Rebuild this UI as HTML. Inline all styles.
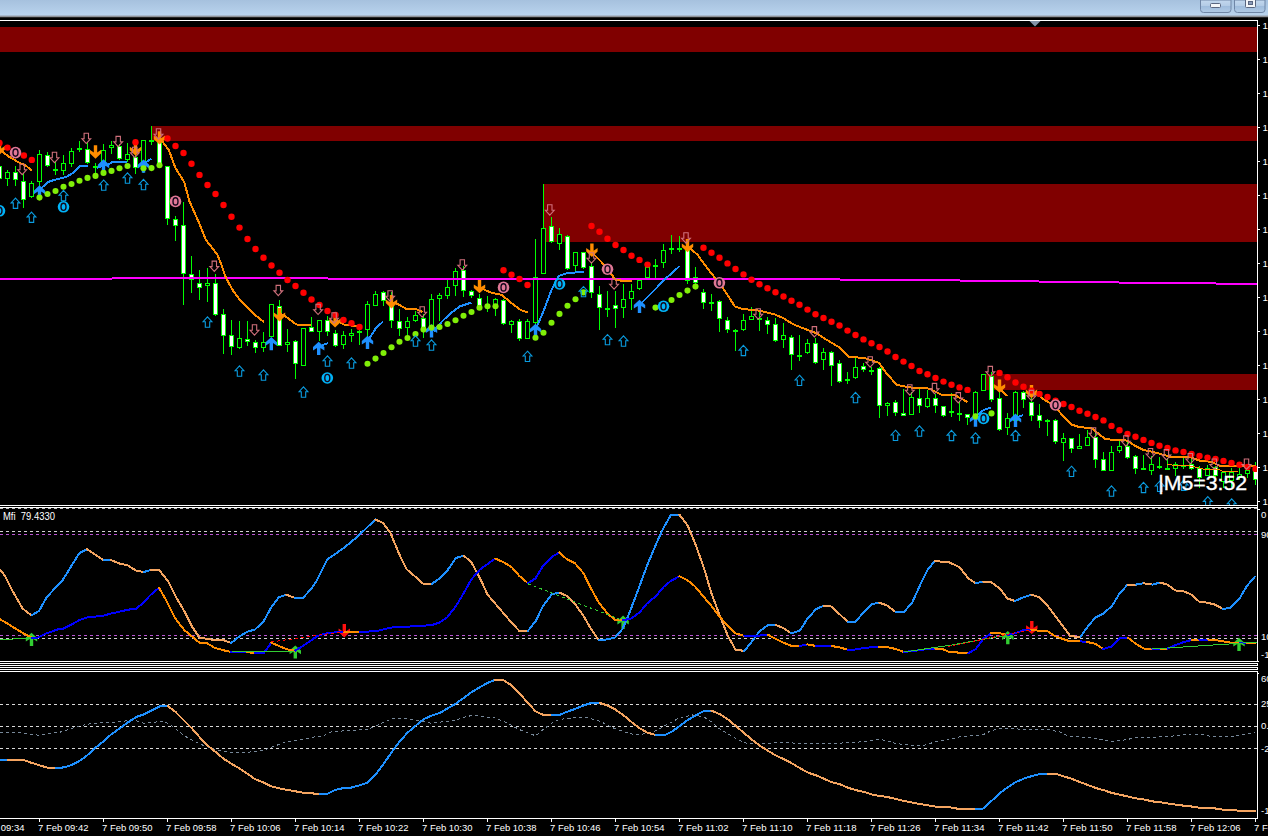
<!DOCTYPE html><html><head><meta charset="utf-8"><title>chart</title><style>
html,body{margin:0;padding:0;background:#000;overflow:hidden}body{width:1268px;height:836px;position:relative;font-family:"Liberation Sans",sans-serif}svg{position:absolute;left:0;top:0;display:block}text{font-family:"Liberation Sans",sans-serif}
</style></head><body>
<svg width="1268" height="836" viewBox="0 0 1268 836">
<defs><linearGradient id="tb" x1="0" y1="0" x2="0" y2="1"><stop offset="0" stop-color="#a6c1de"/><stop offset="1" stop-color="#bad4ee"/></linearGradient>
<linearGradient id="btn" x1="0" y1="0" x2="0" y2="1"><stop offset="0" stop-color="#c3d8ee"/><stop offset="0.45" stop-color="#b4cce6"/><stop offset="0.5" stop-color="#9fbcdc"/><stop offset="1" stop-color="#b0cae6"/></linearGradient>
<clipPath id="cm"><rect x="0" y="21" width="1257" height="484"/></clipPath>
<clipPath id="c2"><rect x="0" y="508" width="1257" height="153"/></clipPath>
<clipPath id="c3"><rect x="0" y="672" width="1257" height="146"/></clipPath>
</defs>
<rect width="1268" height="836" fill="#000"/>
<rect x="0" y="0" width="1268" height="16" fill="url(#tb)"/><rect x="0" y="15.6" width="1268" height="1.4" fill="#8e9298"/><rect x="0" y="17" width="1268" height="1" fill="#262626"/>
<path d="M1200.5,0 V9.5 Q1200.5,12.5 1203.5,12.5 H1228 Q1231,12.5 1231,9.5 V0 Z" fill="url(#btn)" stroke="#6f86a6" stroke-width="1"/>
<path d="M1234.5,0 V9.5 Q1234.5,12.5 1237.5,12.5 H1262 Q1265,12.5 1265,9.5 V0 Z" fill="url(#btn)" stroke="#6f86a6" stroke-width="1"/>
<rect x="1210.5" y="3.5" width="10" height="4" rx="1" fill="#f4f6f9" stroke="#5b6780" stroke-width="1"/>
<rect x="1245.5" y="-2.5" width="10" height="10" rx="1" fill="#f4f6f9" stroke="#5b6780" stroke-width="1"/>
<rect x="1248.5" y="1.5" width="4" height="3" fill="#8a99b8" stroke="#5b6780" stroke-width="1"/>
<g shape-rendering="crispEdges">
<rect x="0" y="20" width="1258" height="1" fill="#fff"/>
<rect x="1257" y="20" width="1" height="642" fill="#fff"/>
<rect x="1257" y="671" width="1" height="148" fill="#fff"/>
<rect x="1257" y="663" width="1" height="3" fill="#fff"/>
<rect x="1257" y="667" width="1" height="3" fill="#fff"/>
<rect x="0" y="505" width="1258" height="1" fill="#fff"/>
<rect x="0" y="507" width="1258" height="1" fill="#fff"/>
<rect x="0" y="661" width="1258" height="1" fill="#fff"/>
<rect x="0" y="663" width="1258" height="1" fill="#fff"/>
<rect x="0" y="665" width="1258" height="1" fill="#fff"/>
<rect x="0" y="667" width="1258" height="1" fill="#fff"/>
<rect x="0" y="669" width="1258" height="1" fill="#fff"/>
<rect x="0" y="671" width="1258" height="1" fill="#fff"/>
<rect x="0" y="818" width="1258" height="1" fill="#fff"/>
<rect x="1258" y="25" width="2" height="1" fill="#fff"/>
<rect x="1258" y="59" width="2" height="1" fill="#fff"/>
<rect x="1258" y="93" width="2" height="1" fill="#fff"/>
<rect x="1258" y="127" width="2" height="1" fill="#fff"/>
<rect x="1258" y="161" width="2" height="1" fill="#fff"/>
<rect x="1258" y="195" width="2" height="1" fill="#fff"/>
<rect x="1258" y="229" width="2" height="1" fill="#fff"/>
<rect x="1258" y="263" width="2" height="1" fill="#fff"/>
<rect x="1258" y="297" width="2" height="1" fill="#fff"/>
<rect x="1258" y="331" width="2" height="1" fill="#fff"/>
<rect x="1258" y="365" width="2" height="1" fill="#fff"/>
<rect x="1258" y="399" width="2" height="1" fill="#fff"/>
<rect x="1258" y="433" width="2" height="1" fill="#fff"/>
<rect x="1258" y="467" width="2" height="1" fill="#fff"/>
<rect x="1258" y="501" width="2" height="1" fill="#fff"/>
<rect x="39" y="819" width="1" height="3" fill="#fff"/>
<rect x="103" y="819" width="1" height="3" fill="#fff"/>
<rect x="167" y="819" width="1" height="3" fill="#fff"/>
<rect x="231" y="819" width="1" height="3" fill="#fff"/>
<rect x="295" y="819" width="1" height="3" fill="#fff"/>
<rect x="359" y="819" width="1" height="3" fill="#fff"/>
<rect x="423" y="819" width="1" height="3" fill="#fff"/>
<rect x="487" y="819" width="1" height="3" fill="#fff"/>
<rect x="551" y="819" width="1" height="3" fill="#fff"/>
<rect x="615" y="819" width="1" height="3" fill="#fff"/>
<rect x="679" y="819" width="1" height="3" fill="#fff"/>
<rect x="743" y="819" width="1" height="3" fill="#fff"/>
<rect x="807" y="819" width="1" height="3" fill="#fff"/>
<rect x="871" y="819" width="1" height="3" fill="#fff"/>
<rect x="935" y="819" width="1" height="3" fill="#fff"/>
<rect x="999" y="819" width="1" height="3" fill="#fff"/>
<rect x="1063" y="819" width="1" height="3" fill="#fff"/>
<rect x="1127" y="819" width="1" height="3" fill="#fff"/>
<rect x="1191" y="819" width="1" height="3" fill="#fff"/>
<rect x="1255" y="819" width="1" height="3" fill="#fff"/>
<rect x="1258" y="509" width="2" height="1" fill="#fff"/><rect x="1258" y="661" width="1" height="1" fill="#fff"/><rect x="1258" y="673" width="1" height="1" fill="#fff"/>
<rect x="0" y="27" width="1257" height="25" fill="#800000"/>
<rect x="152" y="126" width="1105" height="15" fill="#800000"/>
<rect x="544" y="184" width="713" height="58" fill="#800000"/>
<rect x="984" y="374" width="273" height="16" fill="#800000"/>
<line x1="0" y1="508.5" x2="1257" y2="508.5" stroke="#c0c0c0" stroke-width="1" stroke-dasharray="3 3"/>
<line x1="0" y1="531.5" x2="1257" y2="531.5" stroke="#d0d0d0" stroke-width="1" stroke-dasharray="3 3"/>
<line x1="0" y1="534.5" x2="1257" y2="534.5" stroke="#BA55D3" stroke-width="1" stroke-dasharray="3 3"/>
<line x1="0" y1="635.5" x2="1257" y2="635.5" stroke="#BA55D3" stroke-width="1" stroke-dasharray="3 3"/>
<line x1="0" y1="638.5" x2="1257" y2="638.5" stroke="#d0d0d0" stroke-width="1" stroke-dasharray="3 3"/>
<line x1="0" y1="704.5" x2="1257" y2="704.5" stroke="#d8d8d8" stroke-width="1" stroke-dasharray="3 3"/>
<line x1="0" y1="726.5" x2="1257" y2="726.5" stroke="#d8d8d8" stroke-width="1" stroke-dasharray="3 3"/>
<line x1="0" y1="748.5" x2="1257" y2="748.5" stroke="#d8d8d8" stroke-width="1" stroke-dasharray="3 3"/>
</g>
<polygon points="1029.5,21 1040.5,21 1035,26.5" fill="#8494a8"/>
<g clip-path="url(#cm)">
<g shape-rendering="crispEdges"><rect x="-1" y="160" width="1" height="25" fill="#0f0"/>
<rect x="-2.5" y="166.5" width="4" height="12" fill="#fff" stroke="#0f0" stroke-width="1"/>
<rect x="7" y="170" width="1" height="16" fill="#0f0"/>
<rect x="5.5" y="172.5" width="4" height="6" fill="#000" stroke="#0f0" stroke-width="1"/>
<rect x="15" y="166" width="1" height="20" fill="#0f0"/>
<rect x="13.5" y="172.5" width="4" height="7" fill="#fff" stroke="#0f0" stroke-width="1"/>
<rect x="23" y="173" width="1" height="35" fill="#0f0"/>
<rect x="21.5" y="181.5" width="4" height="18" fill="#fff" stroke="#0f0" stroke-width="1"/>
<rect x="31" y="181" width="1" height="17" fill="#0f0"/>
<rect x="29.5" y="183.5" width="4" height="13" fill="#000" stroke="#0f0" stroke-width="1"/>
<rect x="39" y="150" width="1" height="38" fill="#0f0"/>
<rect x="37.5" y="154.5" width="4" height="27" fill="#000" stroke="#0f0" stroke-width="1"/>
<rect x="47" y="152" width="1" height="15" fill="#0f0"/>
<rect x="45.5" y="155.5" width="4" height="10" fill="#fff" stroke="#0f0" stroke-width="1"/>
<rect x="55" y="162" width="1" height="13" fill="#0f0"/>
<rect x="53.5" y="169.5" width="4" height="1" fill="#fff" stroke="#0f0" stroke-width="1"/>
<rect x="63" y="155" width="1" height="20" fill="#0f0"/>
<rect x="61.5" y="163.5" width="4" height="7" fill="#000" stroke="#0f0" stroke-width="1"/>
<rect x="71" y="148" width="1" height="19" fill="#0f0"/>
<rect x="69.5" y="151.5" width="4" height="12" fill="#000" stroke="#0f0" stroke-width="1"/>
<rect x="79" y="141" width="1" height="11" fill="#0f0"/>
<rect x="77" y="148" width="5" height="2" fill="#0f0"/>
<rect x="87" y="142" width="1" height="22" fill="#0f0"/>
<rect x="85.5" y="149.5" width="4" height="13" fill="#fff" stroke="#0f0" stroke-width="1"/>
<rect x="95" y="163" width="1" height="10" fill="#0f0"/>
<rect x="93.5" y="166.5" width="4" height="1" fill="#fff" stroke="#0f0" stroke-width="1"/>
<rect x="103" y="144" width="1" height="27" fill="#0f0"/>
<rect x="101.5" y="150.5" width="4" height="13" fill="#000" stroke="#0f0" stroke-width="1"/>
<rect x="111" y="141" width="1" height="13" fill="#0f0"/>
<rect x="109.5" y="145.5" width="4" height="2" fill="#000" stroke="#0f0" stroke-width="1"/>
<rect x="119" y="144" width="1" height="16" fill="#0f0"/>
<rect x="117.5" y="146.5" width="4" height="12" fill="#fff" stroke="#0f0" stroke-width="1"/>
<rect x="127" y="143" width="1" height="19" fill="#0f0"/>
<rect x="125.5" y="154.5" width="4" height="5" fill="#000" stroke="#0f0" stroke-width="1"/>
<rect x="135" y="148" width="1" height="26" fill="#0f0"/>
<rect x="133.5" y="157.5" width="4" height="10" fill="#fff" stroke="#0f0" stroke-width="1"/>
<rect x="143" y="140" width="1" height="33" fill="#0f0"/>
<rect x="141.5" y="140.5" width="4" height="26" fill="#000" stroke="#0f0" stroke-width="1"/>
<rect x="151" y="126" width="1" height="19" fill="#0f0"/>
<rect x="149" y="140" width="5" height="2" fill="#0f0"/>
<rect x="159" y="133" width="1" height="31" fill="#0f0"/>
<rect x="157.5" y="142.5" width="4" height="21" fill="#fff" stroke="#0f0" stroke-width="1"/>
<rect x="167" y="166" width="1" height="59" fill="#0f0"/>
<rect x="165.5" y="166.5" width="4" height="52" fill="#fff" stroke="#0f0" stroke-width="1"/>
<rect x="175" y="216" width="1" height="25" fill="#0f0"/>
<rect x="173.5" y="219.5" width="4" height="6" fill="#fff" stroke="#0f0" stroke-width="1"/>
<rect x="183" y="202" width="1" height="103" fill="#0f0"/>
<rect x="181.5" y="225.5" width="4" height="48" fill="#fff" stroke="#0f0" stroke-width="1"/>
<rect x="191" y="256" width="1" height="37" fill="#0f0"/>
<rect x="189.5" y="274.5" width="4" height="5" fill="#fff" stroke="#0f0" stroke-width="1"/>
<rect x="199" y="270" width="1" height="30" fill="#0f0"/>
<rect x="197.5" y="283.5" width="4" height="4" fill="#fff" stroke="#0f0" stroke-width="1"/>
<rect x="207" y="268" width="1" height="34" fill="#0f0"/>
<rect x="205.5" y="283.5" width="4" height="2" fill="#000" stroke="#0f0" stroke-width="1"/>
<rect x="215" y="274" width="1" height="42" fill="#0f0"/>
<rect x="213.5" y="283.5" width="4" height="31" fill="#fff" stroke="#0f0" stroke-width="1"/>
<rect x="223" y="309" width="1" height="45" fill="#0f0"/>
<rect x="221.5" y="314.5" width="4" height="21" fill="#fff" stroke="#0f0" stroke-width="1"/>
<rect x="231" y="320" width="1" height="35" fill="#0f0"/>
<rect x="229.5" y="335.5" width="4" height="11" fill="#fff" stroke="#0f0" stroke-width="1"/>
<rect x="239" y="321" width="1" height="28" fill="#0f0"/>
<rect x="237.5" y="338.5" width="4" height="9" fill="#000" stroke="#0f0" stroke-width="1"/>
<rect x="247" y="321" width="1" height="25" fill="#0f0"/>
<rect x="245.5" y="339.5" width="4" height="2" fill="#fff" stroke="#0f0" stroke-width="1"/>
<rect x="255" y="340" width="1" height="13" fill="#0f0"/>
<rect x="253.5" y="342.5" width="4" height="5" fill="#fff" stroke="#0f0" stroke-width="1"/>
<rect x="263" y="332" width="1" height="20" fill="#0f0"/>
<rect x="261.5" y="342.5" width="4" height="5" fill="#000" stroke="#0f0" stroke-width="1"/>
<rect x="271" y="304" width="1" height="33" fill="#0f0"/>
<rect x="269.5" y="304.5" width="4" height="32" fill="#000" stroke="#0f0" stroke-width="1"/>
<rect x="279" y="300" width="1" height="46" fill="#0f0"/>
<rect x="277.5" y="306.5" width="4" height="39" fill="#fff" stroke="#0f0" stroke-width="1"/>
<rect x="287" y="329" width="1" height="23" fill="#0f0"/>
<rect x="285.5" y="342.5" width="4" height="2" fill="#000" stroke="#0f0" stroke-width="1"/>
<rect x="295" y="340" width="1" height="39" fill="#0f0"/>
<rect x="293.5" y="341.5" width="4" height="22" fill="#fff" stroke="#0f0" stroke-width="1"/>
<rect x="303" y="328" width="1" height="38" fill="#0f0"/>
<rect x="301.5" y="328.5" width="4" height="37" fill="#000" stroke="#0f0" stroke-width="1"/>
<rect x="311" y="317" width="1" height="15" fill="#0f0"/>
<rect x="309.5" y="327.5" width="4" height="4" fill="#fff" stroke="#0f0" stroke-width="1"/>
<rect x="319" y="320" width="1" height="21" fill="#0f0"/>
<rect x="317.5" y="320.5" width="4" height="11" fill="#000" stroke="#0f0" stroke-width="1"/>
<rect x="327" y="316" width="1" height="20" fill="#0f0"/>
<rect x="325.5" y="320.5" width="4" height="11" fill="#fff" stroke="#0f0" stroke-width="1"/>
<rect x="335" y="330" width="1" height="17" fill="#0f0"/>
<rect x="333.5" y="333.5" width="4" height="12" fill="#fff" stroke="#0f0" stroke-width="1"/>
<rect x="343" y="331" width="1" height="18" fill="#0f0"/>
<rect x="341.5" y="335.5" width="4" height="9" fill="#000" stroke="#0f0" stroke-width="1"/>
<rect x="351" y="329" width="1" height="13" fill="#0f0"/>
<rect x="349.5" y="333.5" width="4" height="2" fill="#000" stroke="#0f0" stroke-width="1"/>
<rect x="359" y="328" width="1" height="17" fill="#0f0"/>
<rect x="357" y="331" width="5" height="2" fill="#0f0"/>
<rect x="367" y="301" width="1" height="40" fill="#0f0"/>
<rect x="365.5" y="304.5" width="4" height="25" fill="#000" stroke="#0f0" stroke-width="1"/>
<rect x="375" y="291" width="1" height="15" fill="#0f0"/>
<rect x="373.5" y="294.5" width="4" height="11" fill="#000" stroke="#0f0" stroke-width="1"/>
<rect x="383" y="291" width="1" height="15" fill="#0f0"/>
<rect x="381.5" y="292.5" width="4" height="8" fill="#fff" stroke="#0f0" stroke-width="1"/>
<rect x="391" y="292" width="1" height="36" fill="#0f0"/>
<rect x="389.5" y="304.5" width="4" height="16" fill="#fff" stroke="#0f0" stroke-width="1"/>
<rect x="399" y="309" width="1" height="27" fill="#0f0"/>
<rect x="397.5" y="321.5" width="4" height="7" fill="#fff" stroke="#0f0" stroke-width="1"/>
<rect x="407" y="317" width="1" height="18" fill="#0f0"/>
<rect x="405.5" y="321.5" width="4" height="6" fill="#000" stroke="#0f0" stroke-width="1"/>
<rect x="415" y="311" width="1" height="11" fill="#0f0"/>
<rect x="413.5" y="315.5" width="4" height="5" fill="#000" stroke="#0f0" stroke-width="1"/>
<rect x="423" y="314" width="1" height="24" fill="#0f0"/>
<rect x="421.5" y="318.5" width="4" height="12" fill="#fff" stroke="#0f0" stroke-width="1"/>
<rect x="431" y="294" width="1" height="43" fill="#0f0"/>
<rect x="429.5" y="299.5" width="4" height="27" fill="#000" stroke="#0f0" stroke-width="1"/>
<rect x="439" y="293" width="1" height="28" fill="#0f0"/>
<rect x="437.5" y="295.5" width="4" height="3" fill="#000" stroke="#0f0" stroke-width="1"/>
<rect x="447" y="280" width="1" height="19" fill="#0f0"/>
<rect x="445.5" y="287.5" width="4" height="8" fill="#000" stroke="#0f0" stroke-width="1"/>
<rect x="455" y="268" width="1" height="28" fill="#0f0"/>
<rect x="453.5" y="271.5" width="4" height="14" fill="#000" stroke="#0f0" stroke-width="1"/>
<rect x="463" y="266" width="1" height="31" fill="#0f0"/>
<rect x="461.5" y="270.5" width="4" height="20" fill="#fff" stroke="#0f0" stroke-width="1"/>
<rect x="471" y="290" width="1" height="8" fill="#0f0"/>
<rect x="469.5" y="291.5" width="4" height="4" fill="#fff" stroke="#0f0" stroke-width="1"/>
<rect x="479" y="294" width="1" height="14" fill="#0f0"/>
<rect x="477.5" y="298.5" width="4" height="7" fill="#fff" stroke="#0f0" stroke-width="1"/>
<rect x="487" y="296" width="1" height="16" fill="#0f0"/>
<rect x="485" y="305" width="5" height="2" fill="#0f0"/>
<rect x="495" y="298" width="1" height="18" fill="#0f0"/>
<rect x="493.5" y="299.5" width="4" height="8" fill="#000" stroke="#0f0" stroke-width="1"/>
<rect x="503" y="299" width="1" height="26" fill="#0f0"/>
<rect x="501.5" y="300.5" width="4" height="23" fill="#fff" stroke="#0f0" stroke-width="1"/>
<rect x="511" y="320" width="1" height="13" fill="#0f0"/>
<rect x="509.5" y="321.5" width="4" height="3" fill="#000" stroke="#0f0" stroke-width="1"/>
<rect x="519" y="319" width="1" height="22" fill="#0f0"/>
<rect x="517.5" y="321.5" width="4" height="17" fill="#fff" stroke="#0f0" stroke-width="1"/>
<rect x="527" y="319" width="1" height="20" fill="#0f0"/>
<rect x="525.5" y="321.5" width="4" height="17" fill="#000" stroke="#0f0" stroke-width="1"/>
<rect x="535" y="239" width="1" height="95" fill="#0f0"/>
<rect x="533.5" y="277.5" width="4" height="45" fill="#000" stroke="#0f0" stroke-width="1"/>
<rect x="543" y="184" width="1" height="90" fill="#0f0"/>
<rect x="541.5" y="228.5" width="4" height="45" fill="#000" stroke="#0f0" stroke-width="1"/>
<rect x="551" y="217" width="1" height="26" fill="#0f0"/>
<rect x="549.5" y="226.5" width="4" height="15" fill="#fff" stroke="#0f0" stroke-width="1"/>
<rect x="559" y="228" width="1" height="22" fill="#0f0"/>
<rect x="557.5" y="234.5" width="4" height="9" fill="#000" stroke="#0f0" stroke-width="1"/>
<rect x="567" y="235" width="1" height="35" fill="#0f0"/>
<rect x="565.5" y="236.5" width="4" height="32" fill="#fff" stroke="#0f0" stroke-width="1"/>
<rect x="575" y="252" width="1" height="20" fill="#0f0"/>
<rect x="573.5" y="252.5" width="4" height="13" fill="#000" stroke="#0f0" stroke-width="1"/>
<rect x="583" y="252" width="1" height="17" fill="#0f0"/>
<rect x="581.5" y="252.5" width="4" height="15" fill="#fff" stroke="#0f0" stroke-width="1"/>
<rect x="591" y="263" width="1" height="35" fill="#0f0"/>
<rect x="589.5" y="266.5" width="4" height="26" fill="#fff" stroke="#0f0" stroke-width="1"/>
<rect x="599" y="286" width="1" height="44" fill="#0f0"/>
<rect x="597.5" y="294.5" width="4" height="13" fill="#fff" stroke="#0f0" stroke-width="1"/>
<rect x="607" y="291" width="1" height="26" fill="#0f0"/>
<rect x="605" y="308" width="5" height="2" fill="#0f0"/>
<rect x="615" y="291" width="1" height="37" fill="#0f0"/>
<rect x="613.5" y="305.5" width="4" height="3" fill="#fff" stroke="#0f0" stroke-width="1"/>
<rect x="623" y="284" width="1" height="34" fill="#0f0"/>
<rect x="621.5" y="299.5" width="4" height="8" fill="#000" stroke="#0f0" stroke-width="1"/>
<rect x="631" y="284" width="1" height="26" fill="#0f0"/>
<rect x="629.5" y="291.5" width="4" height="7" fill="#000" stroke="#0f0" stroke-width="1"/>
<rect x="639" y="278" width="1" height="12" fill="#0f0"/>
<rect x="637.5" y="280.5" width="4" height="8" fill="#000" stroke="#0f0" stroke-width="1"/>
<rect x="647" y="266" width="1" height="14" fill="#0f0"/>
<rect x="645.5" y="267.5" width="4" height="10" fill="#000" stroke="#0f0" stroke-width="1"/>
<rect x="655" y="259" width="1" height="19" fill="#0f0"/>
<rect x="653" y="265" width="5" height="2" fill="#0f0"/>
<rect x="663" y="244" width="1" height="24" fill="#0f0"/>
<rect x="661.5" y="250.5" width="4" height="12" fill="#000" stroke="#0f0" stroke-width="1"/>
<rect x="671" y="235" width="1" height="19" fill="#0f0"/>
<rect x="669" y="248" width="5" height="2" fill="#0f0"/>
<rect x="679" y="236" width="1" height="16" fill="#0f0"/>
<rect x="677" y="248" width="5" height="2" fill="#0f0"/>
<rect x="687" y="246" width="1" height="38" fill="#0f0"/>
<rect x="685.5" y="250.5" width="4" height="30" fill="#fff" stroke="#0f0" stroke-width="1"/>
<rect x="695" y="267" width="1" height="18" fill="#0f0"/>
<rect x="693.5" y="277.5" width="4" height="5" fill="#fff" stroke="#0f0" stroke-width="1"/>
<rect x="703" y="289" width="1" height="20" fill="#0f0"/>
<rect x="701.5" y="292.5" width="4" height="10" fill="#fff" stroke="#0f0" stroke-width="1"/>
<rect x="711" y="294" width="1" height="17" fill="#0f0"/>
<rect x="709" y="302" width="5" height="2" fill="#0f0"/>
<rect x="719" y="300" width="1" height="32" fill="#0f0"/>
<rect x="717.5" y="301.5" width="4" height="17" fill="#fff" stroke="#0f0" stroke-width="1"/>
<rect x="727" y="317" width="1" height="16" fill="#0f0"/>
<rect x="725.5" y="320.5" width="4" height="9" fill="#fff" stroke="#0f0" stroke-width="1"/>
<rect x="735" y="329" width="1" height="22" fill="#0f0"/>
<rect x="733" y="330" width="5" height="2" fill="#0f0"/>
<rect x="743" y="314" width="1" height="17" fill="#0f0"/>
<rect x="741.5" y="320.5" width="4" height="9" fill="#000" stroke="#0f0" stroke-width="1"/>
<rect x="751" y="307" width="1" height="13" fill="#0f0"/>
<rect x="749.5" y="316.5" width="4" height="3" fill="#000" stroke="#0f0" stroke-width="1"/>
<rect x="759" y="310" width="1" height="21" fill="#0f0"/>
<rect x="757.5" y="318.5" width="4" height="1" fill="#fff" stroke="#0f0" stroke-width="1"/>
<rect x="767" y="317" width="1" height="17" fill="#0f0"/>
<rect x="765.5" y="320.5" width="4" height="4" fill="#fff" stroke="#0f0" stroke-width="1"/>
<rect x="775" y="318" width="1" height="24" fill="#0f0"/>
<rect x="773.5" y="324.5" width="4" height="16" fill="#fff" stroke="#0f0" stroke-width="1"/>
<rect x="783" y="323" width="1" height="25" fill="#0f0"/>
<rect x="781.5" y="335.5" width="4" height="4" fill="#000" stroke="#0f0" stroke-width="1"/>
<rect x="791" y="335" width="1" height="35" fill="#0f0"/>
<rect x="789.5" y="337.5" width="4" height="17" fill="#fff" stroke="#0f0" stroke-width="1"/>
<rect x="799" y="335" width="1" height="26" fill="#0f0"/>
<rect x="797" y="355" width="5" height="2" fill="#0f0"/>
<rect x="807" y="339" width="1" height="15" fill="#0f0"/>
<rect x="805.5" y="343.5" width="4" height="9" fill="#000" stroke="#0f0" stroke-width="1"/>
<rect x="815" y="338" width="1" height="26" fill="#0f0"/>
<rect x="813.5" y="343.5" width="4" height="19" fill="#fff" stroke="#0f0" stroke-width="1"/>
<rect x="823" y="348" width="1" height="22" fill="#0f0"/>
<rect x="821.5" y="352.5" width="4" height="7" fill="#000" stroke="#0f0" stroke-width="1"/>
<rect x="831" y="351" width="1" height="35" fill="#0f0"/>
<rect x="829.5" y="352.5" width="4" height="13" fill="#fff" stroke="#0f0" stroke-width="1"/>
<rect x="839" y="360" width="1" height="23" fill="#0f0"/>
<rect x="837.5" y="363.5" width="4" height="18" fill="#fff" stroke="#0f0" stroke-width="1"/>
<rect x="847" y="372" width="1" height="12" fill="#0f0"/>
<rect x="845" y="379" width="5" height="2" fill="#0f0"/>
<rect x="855" y="357" width="1" height="22" fill="#0f0"/>
<rect x="853.5" y="367.5" width="4" height="10" fill="#000" stroke="#0f0" stroke-width="1"/>
<rect x="863" y="363" width="1" height="9" fill="#0f0"/>
<rect x="861.5" y="366.5" width="4" height="3" fill="#fff" stroke="#0f0" stroke-width="1"/>
<rect x="871" y="367" width="1" height="8" fill="#0f0"/>
<rect x="869" y="370" width="5" height="2" fill="#0f0"/>
<rect x="879" y="367" width="1" height="51" fill="#0f0"/>
<rect x="877.5" y="368.5" width="4" height="37" fill="#fff" stroke="#0f0" stroke-width="1"/>
<rect x="887" y="402" width="1" height="14" fill="#0f0"/>
<rect x="885.5" y="403.5" width="4" height="2" fill="#000" stroke="#0f0" stroke-width="1"/>
<rect x="895" y="400" width="1" height="16" fill="#0f0"/>
<rect x="893.5" y="402.5" width="4" height="10" fill="#fff" stroke="#0f0" stroke-width="1"/>
<rect x="903" y="389" width="1" height="27" fill="#0f0"/>
<rect x="901.5" y="413.5" width="4" height="2" fill="#fff" stroke="#0f0" stroke-width="1"/>
<rect x="911" y="392" width="1" height="23" fill="#0f0"/>
<rect x="909.5" y="397.5" width="4" height="17" fill="#000" stroke="#0f0" stroke-width="1"/>
<rect x="919" y="387" width="1" height="26" fill="#0f0"/>
<rect x="917.5" y="398.5" width="4" height="7" fill="#fff" stroke="#0f0" stroke-width="1"/>
<rect x="927" y="390" width="1" height="18" fill="#0f0"/>
<rect x="925.5" y="398.5" width="4" height="8" fill="#000" stroke="#0f0" stroke-width="1"/>
<rect x="935" y="394" width="1" height="19" fill="#0f0"/>
<rect x="933.5" y="398.5" width="4" height="7" fill="#fff" stroke="#0f0" stroke-width="1"/>
<rect x="943" y="406" width="1" height="11" fill="#0f0"/>
<rect x="941.5" y="406.5" width="4" height="9" fill="#fff" stroke="#0f0" stroke-width="1"/>
<rect x="951" y="393" width="1" height="24" fill="#0f0"/>
<rect x="949" y="411" width="5" height="2" fill="#0f0"/>
<rect x="959" y="401" width="1" height="20" fill="#0f0"/>
<rect x="957.5" y="413.5" width="4" height="1" fill="#fff" stroke="#0f0" stroke-width="1"/>
<rect x="967" y="414" width="1" height="11" fill="#0f0"/>
<rect x="965.5" y="414.5" width="4" height="3" fill="#fff" stroke="#0f0" stroke-width="1"/>
<rect x="975" y="391" width="1" height="35" fill="#0f0"/>
<rect x="973.5" y="392.5" width="4" height="23" fill="#000" stroke="#0f0" stroke-width="1"/>
<rect x="983" y="374" width="1" height="17" fill="#0f0"/>
<rect x="981.5" y="374.5" width="4" height="16" fill="#000" stroke="#0f0" stroke-width="1"/>
<rect x="991" y="372" width="1" height="30" fill="#0f0"/>
<rect x="989.5" y="376.5" width="4" height="23" fill="#fff" stroke="#0f0" stroke-width="1"/>
<rect x="999" y="391" width="1" height="40" fill="#0f0"/>
<rect x="997.5" y="398.5" width="4" height="31" fill="#fff" stroke="#0f0" stroke-width="1"/>
<rect x="1007" y="413" width="1" height="22" fill="#0f0"/>
<rect x="1005.5" y="418.5" width="4" height="9" fill="#000" stroke="#0f0" stroke-width="1"/>
<rect x="1015" y="391" width="1" height="35" fill="#0f0"/>
<rect x="1013.5" y="392.5" width="4" height="28" fill="#000" stroke="#0f0" stroke-width="1"/>
<rect x="1023" y="391" width="1" height="17" fill="#0f0"/>
<rect x="1021.5" y="392.5" width="4" height="7" fill="#fff" stroke="#0f0" stroke-width="1"/>
<rect x="1031" y="398" width="1" height="23" fill="#0f0"/>
<rect x="1029.5" y="402.5" width="4" height="13" fill="#fff" stroke="#0f0" stroke-width="1"/>
<rect x="1039" y="404" width="1" height="24" fill="#0f0"/>
<rect x="1037.5" y="415.5" width="4" height="5" fill="#fff" stroke="#0f0" stroke-width="1"/>
<rect x="1047" y="419" width="1" height="17" fill="#0f0"/>
<rect x="1045" y="420" width="5" height="2" fill="#0f0"/>
<rect x="1055" y="419" width="1" height="25" fill="#0f0"/>
<rect x="1053.5" y="420.5" width="4" height="21" fill="#fff" stroke="#0f0" stroke-width="1"/>
<rect x="1063" y="433" width="1" height="28" fill="#0f0"/>
<rect x="1061.5" y="438.5" width="4" height="4" fill="#000" stroke="#0f0" stroke-width="1"/>
<rect x="1071" y="438" width="1" height="15" fill="#0f0"/>
<rect x="1069.5" y="438.5" width="4" height="10" fill="#fff" stroke="#0f0" stroke-width="1"/>
<rect x="1079" y="434" width="1" height="15" fill="#0f0"/>
<rect x="1077.5" y="446.5" width="4" height="2" fill="#000" stroke="#0f0" stroke-width="1"/>
<rect x="1087" y="430" width="1" height="16" fill="#0f0"/>
<rect x="1085.5" y="437.5" width="4" height="8" fill="#000" stroke="#0f0" stroke-width="1"/>
<rect x="1095" y="430" width="1" height="38" fill="#0f0"/>
<rect x="1093.5" y="437.5" width="4" height="22" fill="#fff" stroke="#0f0" stroke-width="1"/>
<rect x="1103" y="452" width="1" height="19" fill="#0f0"/>
<rect x="1101.5" y="459.5" width="4" height="11" fill="#fff" stroke="#0f0" stroke-width="1"/>
<rect x="1111" y="446" width="1" height="25" fill="#0f0"/>
<rect x="1109.5" y="452.5" width="4" height="18" fill="#000" stroke="#0f0" stroke-width="1"/>
<rect x="1119" y="440" width="1" height="13" fill="#0f0"/>
<rect x="1117.5" y="446.5" width="4" height="4" fill="#000" stroke="#0f0" stroke-width="1"/>
<rect x="1127" y="441" width="1" height="18" fill="#0f0"/>
<rect x="1125.5" y="446.5" width="4" height="11" fill="#fff" stroke="#0f0" stroke-width="1"/>
<rect x="1135" y="455" width="1" height="19" fill="#0f0"/>
<rect x="1133.5" y="456.5" width="4" height="12" fill="#fff" stroke="#0f0" stroke-width="1"/>
<rect x="1143" y="455" width="1" height="14" fill="#0f0"/>
<rect x="1141" y="468" width="5" height="2" fill="#0f0"/>
<rect x="1151" y="456" width="1" height="19" fill="#0f0"/>
<rect x="1149.5" y="464.5" width="4" height="6" fill="#000" stroke="#0f0" stroke-width="1"/>
<rect x="1159" y="457" width="1" height="12" fill="#0f0"/>
<rect x="1157" y="466" width="5" height="2" fill="#0f0"/>
<rect x="1167" y="458" width="1" height="12" fill="#0f0"/>
<rect x="1165" y="468" width="5" height="2" fill="#0f0"/>
<rect x="1175" y="462" width="1" height="14" fill="#0f0"/>
<rect x="1173.5" y="464.5" width="4" height="4" fill="#000" stroke="#0f0" stroke-width="1"/>
<rect x="1183" y="458" width="1" height="11" fill="#0f0"/>
<rect x="1181" y="465" width="5" height="2" fill="#0f0"/>
<rect x="1191" y="458" width="1" height="12" fill="#0f0"/>
<rect x="1189.5" y="464.5" width="4" height="4" fill="#fff" stroke="#0f0" stroke-width="1"/>
<rect x="1199" y="466" width="1" height="22" fill="#0f0"/>
<rect x="1197.5" y="468.5" width="4" height="9" fill="#fff" stroke="#0f0" stroke-width="1"/>
<rect x="1207" y="465" width="1" height="11" fill="#0f0"/>
<rect x="1205.5" y="468.5" width="4" height="7" fill="#000" stroke="#0f0" stroke-width="1"/>
<rect x="1215" y="466" width="1" height="11" fill="#0f0"/>
<rect x="1213.5" y="467.5" width="4" height="8" fill="#fff" stroke="#0f0" stroke-width="1"/>
<rect x="1223" y="472" width="1" height="16" fill="#0f0"/>
<rect x="1221.5" y="472.5" width="4" height="9" fill="#000" stroke="#0f0" stroke-width="1"/>
<rect x="1231" y="468" width="1" height="19" fill="#0f0"/>
<rect x="1229.5" y="472.5" width="4" height="8" fill="#000" stroke="#0f0" stroke-width="1"/>
<rect x="1239" y="468" width="1" height="12" fill="#0f0"/>
<rect x="1237.5" y="474.5" width="4" height="3" fill="#000" stroke="#0f0" stroke-width="1"/>
<rect x="1247" y="470" width="1" height="8" fill="#0f0"/>
<rect x="1245.5" y="470.5" width="4" height="3" fill="#000" stroke="#0f0" stroke-width="1"/>
<rect x="1255" y="462" width="1" height="23" fill="#0f0"/>
<rect x="1253.5" y="471.5" width="4" height="8" fill="#fff" stroke="#0f0" stroke-width="1"/></g>
<g shape-rendering="crispEdges" fill="#FF00FF">
<rect x="0" y="278" width="112" height="2"/>
<rect x="112" y="277" width="216" height="2"/>
<rect x="328" y="278" width="512" height="2"/>
<rect x="840" y="279" width="120" height="2"/>
<rect x="960" y="280" width="79" height="2"/>
<rect x="1039" y="281" width="80" height="2"/>
<rect x="1119" y="282" width="97" height="2"/>
<rect x="1216" y="283" width="41" height="2"/>
</g>
<polyline points="-1,148.5 0,149.6 7.9,156 17,161.4 26.3,166 31.6,170.4" fill="none" stroke="#FF8C00" stroke-width="2" stroke-linejoin="round" shape-rendering="crispEdges" />
<polyline points="159,138 161.5,140.3 169,150.4 175.4,168 184.2,182 189.3,200.9 199.4,223.6 206,240 212,247.6 217.5,255 220.6,262.7 226,278 233,290.5 239.5,299.3 248.3,308 256,315.7 264,322" fill="none" stroke="#FF8C00" stroke-width="2" stroke-linejoin="round" shape-rendering="crispEdges" />
<polyline points="279,313 287.4,317.7 296.3,324.5 311.4,325" fill="none" stroke="#FF8C00" stroke-width="2" stroke-linejoin="round" shape-rendering="crispEdges" />
<polyline points="334.6,320 344,324.5 359.4,326.6" fill="none" stroke="#FF8C00" stroke-width="2" stroke-linejoin="round" shape-rendering="crispEdges" />
<polyline points="391,301.8 398.5,304.4 406,308.7 415,308.7 422.5,312" fill="none" stroke="#FF8C00" stroke-width="2" stroke-linejoin="round" shape-rendering="crispEdges" />
<polyline points="479,286.6 481.6,288.6 490.5,292.4 501.8,295 510.7,302.5 520.8,310 527.6,312.6" fill="none" stroke="#FF8C00" stroke-width="2" stroke-linejoin="round" shape-rendering="crispEdges" />
<polyline points="591.4,250.3 594,254.6 601.5,262 609,271 615.4,279.8 624,281 631.8,281" fill="none" stroke="#FF8C00" stroke-width="2" stroke-linejoin="round" shape-rendering="crispEdges" />
<polyline points="687,245.7 689.8,248.2 697.4,254.6 707.5,268.4 717.6,281 720,283.9 727.6,295.2 735,306.6 742.7,309 757.9,310.4 774.3,314.2 783,318 793.2,324.3 805.8,329.3 815.9,333 826,339.4 838.6,347 848.7,357 863.9,357.8 879,362.9 886.6,373.5 896.7,384.8 909.3,387.4 929.5,388.6 942,395 954.7,395 967.3,402" fill="none" stroke="#FF8C00" stroke-width="2" stroke-linejoin="round" shape-rendering="crispEdges" />
<polyline points="999,388.6 1007.7,396.2" fill="none" stroke="#FF8C00" stroke-width="2" stroke-linejoin="round" shape-rendering="crispEdges" />
<polyline points="1031,393 1035,393 1044,399.4 1054,405.7 1064,417 1071.7,424.6 1079,427 1091.8,428.4 1104.5,438.5 1112,439.8 1124.7,440.3 1128,441 1134.6,445.5 1143.5,449.9 1155.6,452.6 1171,457 1189.8,457 1198.7,460.4 1212,462 1219.6,465.9 1238.4,465.9 1256,465.9" fill="none" stroke="#FF8C00" stroke-width="2" stroke-linejoin="round" shape-rendering="crispEdges" />
<polyline points="1167.2,464.8 1172,465 1189.8,465.9 1204,469.2 1219.6,469.7 1223,471.7 1238.4,471.7" fill="none" stroke="#FF8C00" stroke-width="1" stroke-linejoin="round" shape-rendering="crispEdges" />
<polyline points="40.8,188.4 48.7,181.8 56.6,179.2 65.8,177.2 73.7,172.6 80.3,166 87.5,166" fill="none" stroke="#1E90FF" stroke-width="2" stroke-linejoin="round" shape-rendering="crispEdges" />
<polyline points="97,168 103,165.4 106.6,165.4 111.8,162.4 120,161.8 127.4,161.7" fill="none" stroke="#1E90FF" stroke-width="2" stroke-linejoin="round" shape-rendering="crispEdges" />
<polyline points="143,164 145,163 151.4,158.5" fill="none" stroke="#1E90FF" stroke-width="2" stroke-linejoin="round" shape-rendering="crispEdges" />
<polyline points="318,347 328,343" fill="none" stroke="#1E90FF" stroke-width="2" stroke-linejoin="round" shape-rendering="crispEdges" />
<polyline points="369.5,338.4 375.8,328.3 383.3,321.3" fill="none" stroke="#1E90FF" stroke-width="2" stroke-linejoin="round" shape-rendering="crispEdges" />
<polyline points="433.8,330.9 442.6,320.8 450,313.9 460,306.3 471.5,302.5" fill="none" stroke="#1E90FF" stroke-width="2" stroke-linejoin="round" shape-rendering="crispEdges" />
<polyline points="537,326.5 543.5,311.3 551,291 558.6,276 566,273.5 583.8,271.5" fill="none" stroke="#1E90FF" stroke-width="2" stroke-linejoin="round" shape-rendering="crispEdges" />
<polyline points="642,302.5 654.5,290 667,277.3 679.7,266" fill="none" stroke="#1E90FF" stroke-width="2" stroke-linejoin="round" shape-rendering="crispEdges" />
<polyline points="977.4,415 983.7,410 991.3,407.5" fill="none" stroke="#1E90FF" stroke-width="2" stroke-linejoin="round" shape-rendering="crispEdges" />
<polyline points="1016.5,417.6 1023,415" fill="none" stroke="#1E90FF" stroke-width="2" stroke-linejoin="round" shape-rendering="crispEdges" />
<polygon points="-0.5,154.7 5.2,149.3 5.2,145.8 1.2,148.5 1.2,141.3 -2.2,141.3 -2.2,148.5 -6.2,145.8 -6.2,149.3" fill="#FF8C00"/>
<polygon points="95.5,158.7 101.2,153.3 101.2,149.8 97.2,152.5 97.2,145.3 93.8,145.3 93.8,152.5 89.8,149.8 89.8,153.3" fill="#FF8C00"/>
<polygon points="135.5,155.7 141.2,150.3 141.2,146.8 137.2,149.5 137.2,142.3 133.8,142.3 133.8,149.5 129.8,146.8 129.8,150.3" fill="#FF8C00"/>
<polygon points="159.5,144.5 165.2,139.2 165.2,135.6 161.2,138.3 161.2,131.2 157.8,131.2 157.8,138.3 153.8,135.6 153.8,139.2" fill="#FF8C00"/>
<polygon points="279.5,321.4 285.2,316.1 285.2,312.6 281.2,315.2 281.2,308.1 277.8,308.1 277.8,315.2 273.8,312.6 273.8,316.1" fill="#FF8C00"/>
<polygon points="335.1,327.4 340.8,322.1 340.8,318.6 336.8,321.2 336.8,314.1 333.4,314.1 333.4,321.2 329.4,318.6 329.4,322.1" fill="#FF8C00"/>
<polygon points="391.5,308.4 397.2,303.1 397.2,299.6 393.2,302.2 393.2,295.1 389.8,295.1 389.8,302.2 385.8,299.6 385.8,303.1" fill="#FF8C00"/>
<polygon points="479.5,293.2 485.2,287.9 485.2,284.4 481.2,287.1 481.2,279.9 477.8,279.9 477.8,287.1 473.8,284.4 473.8,287.9" fill="#FF8C00"/>
<polygon points="591.9,256.9 597.6,251.6 597.6,248.0 593.6,250.8 593.6,243.6 590.2,243.6 590.2,250.8 586.2,248.0 586.2,251.6" fill="#FF8C00"/>
<polygon points="687.5,252.3 693.2,247.0 693.2,243.4 689.2,246.2 689.2,239.0 685.8,239.0 685.8,246.2 681.8,243.4 681.8,247.0" fill="#FF8C00"/>
<polygon points="999.5,392.8 1005.2,387.5 1005.2,383.9 1001.2,386.6 1001.2,379.5 997.8,379.5 997.8,386.6 993.8,383.9 993.8,387.5" fill="#FF8C00"/>
<polygon points="1031.5,398.2 1037.2,392.9 1037.2,389.4 1033.2,392.1 1033.2,384.9 1029.8,384.9 1029.8,392.1 1025.8,389.4 1025.8,392.9" fill="#FF8C00"/>
<polygon points="39.5,185.3 45.2,190.7 45.2,194.2 41.2,191.5 41.2,198.7 37.8,198.7 37.8,191.5 33.8,194.2 33.8,190.7" fill="#1E90FF"/>
<polygon points="103.5,159.3 109.2,164.7 109.2,168.2 105.2,165.5 105.2,172.7 101.8,172.7 101.8,165.5 97.8,168.2 97.8,164.7" fill="#1E90FF"/>
<polygon points="143.5,159.5 149.2,164.8 149.2,168.4 145.2,165.7 145.2,172.8 141.8,172.8 141.8,165.7 137.8,168.4 137.8,164.8" fill="#1E90FF"/>
<polygon points="271.3,336.9 277.0,342.2 277.0,345.8 273.0,343.1 273.0,350.2 269.6,350.2 269.6,343.1 265.6,345.8 265.6,342.2" fill="#1E90FF"/>
<polygon points="318.7,341.8 324.4,347.1 324.4,350.6 320.4,347.9 320.4,355.1 317.0,355.1 317.0,347.9 313.0,350.6 313.0,347.1" fill="#1E90FF"/>
<polygon points="367.5,335.7 373.2,341.0 373.2,344.6 369.2,341.9 369.2,349.0 365.8,349.0 365.8,341.9 361.8,344.6 361.8,341.0" fill="#1E90FF"/>
<polygon points="431.5,324.2 437.2,329.5 437.2,333.1 433.2,330.4 433.2,337.5 429.8,337.5 429.8,330.4 425.8,333.1 425.8,329.5" fill="#1E90FF"/>
<polygon points="535.5,323.7 541.2,329.0 541.2,332.6 537.2,329.9 537.2,337.0 533.8,337.0 533.8,329.9 529.8,332.6 529.8,329.0" fill="#1E90FF"/>
<polygon points="639.5,299.7 645.2,305.0 645.2,308.6 641.2,305.9 641.2,313.0 637.8,313.0 637.8,305.9 633.8,308.6 633.8,305.0" fill="#1E90FF"/>
<polygon points="975.5,413.4 981.2,418.7 981.2,422.2 977.2,419.6 977.2,426.7 973.8,426.7 973.8,419.6 969.8,422.2 969.8,418.7" fill="#1E90FF"/>
<polygon points="1015.5,413.6 1021.2,418.9 1021.2,422.4 1017.2,419.8 1017.2,426.9 1013.8,426.9 1013.8,419.8 1009.8,422.4 1009.8,418.9" fill="#1E90FF"/>
<circle cx="39.5" cy="197.6" r="3.05" fill="#80EE08"/>
<circle cx="47.5" cy="194" r="3.05" fill="#80EE08"/>
<circle cx="55.5" cy="191" r="3.05" fill="#80EE08"/>
<circle cx="63.5" cy="186.8" r="3.05" fill="#80EE08"/>
<circle cx="71.5" cy="184" r="3.05" fill="#80EE08"/>
<circle cx="79.5" cy="180.8" r="3.05" fill="#80EE08"/>
<circle cx="87.5" cy="177.9" r="3.05" fill="#80EE08"/>
<circle cx="95.5" cy="175.9" r="3.05" fill="#80EE08"/>
<circle cx="103.5" cy="172.9" r="3.05" fill="#80EE08"/>
<circle cx="111.5" cy="170.9" r="3.05" fill="#80EE08"/>
<circle cx="119.5" cy="168.3" r="3.05" fill="#80EE08"/>
<circle cx="127.5" cy="166" r="3.05" fill="#80EE08"/>
<circle cx="143.5" cy="168.3" r="3.05" fill="#80EE08"/>
<circle cx="151.5" cy="168.1" r="3.05" fill="#80EE08"/>
<circle cx="159.5" cy="165.2" r="3.05" fill="#80EE08"/>
<circle cx="367.5" cy="363.7" r="3.05" fill="#80EE08"/>
<circle cx="375.5" cy="358.6" r="3.05" fill="#80EE08"/>
<circle cx="383.5" cy="353" r="3.05" fill="#80EE08"/>
<circle cx="391.5" cy="347.3" r="3.05" fill="#80EE08"/>
<circle cx="399.5" cy="341.7" r="3.05" fill="#80EE08"/>
<circle cx="407.5" cy="338" r="3.05" fill="#80EE08"/>
<circle cx="415.5" cy="334" r="3.05" fill="#80EE08"/>
<circle cx="423.5" cy="329.6" r="3.05" fill="#80EE08"/>
<circle cx="431.5" cy="327.6" r="3.05" fill="#80EE08"/>
<circle cx="439.5" cy="327" r="3.05" fill="#80EE08"/>
<circle cx="447.5" cy="324" r="3.05" fill="#80EE08"/>
<circle cx="455.5" cy="320.3" r="3.05" fill="#80EE08"/>
<circle cx="463.5" cy="315.8" r="3.05" fill="#80EE08"/>
<circle cx="471.5" cy="312" r="3.05" fill="#80EE08"/>
<circle cx="479.5" cy="307.8" r="3.05" fill="#80EE08"/>
<circle cx="487.5" cy="306.3" r="3.05" fill="#80EE08"/>
<circle cx="495.5" cy="306.3" r="3.05" fill="#80EE08"/>
<circle cx="535.5" cy="337.8" r="3.05" fill="#80EE08"/>
<circle cx="543.5" cy="332.8" r="3.05" fill="#80EE08"/>
<circle cx="551.5" cy="322.7" r="3.05" fill="#80EE08"/>
<circle cx="559.5" cy="313.9" r="3.05" fill="#80EE08"/>
<circle cx="567.5" cy="305.8" r="3.05" fill="#80EE08"/>
<circle cx="575.5" cy="299.2" r="3.05" fill="#80EE08"/>
<circle cx="583.5" cy="292.4" r="3.05" fill="#80EE08"/>
<circle cx="655.5" cy="307.6" r="3.05" fill="#80EE08"/>
<circle cx="663.5" cy="305.8" r="3.05" fill="#80EE08"/>
<circle cx="671.5" cy="300" r="3.05" fill="#80EE08"/>
<circle cx="679.5" cy="295" r="3.05" fill="#80EE08"/>
<circle cx="687.5" cy="290.6" r="3.05" fill="#80EE08"/>
<circle cx="695.5" cy="286.6" r="3.05" fill="#80EE08"/>
<circle cx="975.5" cy="416.4" r="3.05" fill="#80EE08"/>
<circle cx="983.5" cy="417.5" r="3.05" fill="#80EE08"/>
<circle cx="991.5" cy="413.4" r="3.05" fill="#80EE08"/>
<circle cx="-0.5" cy="143" r="3.2" fill="#FF0000"/>
<circle cx="7.5" cy="147.6" r="3.2" fill="#FF0000"/>
<circle cx="16.0" cy="152" r="3.2" fill="#FF0000"/>
<circle cx="23.9" cy="155.5" r="3.2" fill="#FF0000"/>
<circle cx="31.8" cy="159.9" r="3.2" fill="#FF0000"/>
<circle cx="135.5" cy="142.3" r="3.2" fill="#FF0000"/>
<circle cx="167.5" cy="138.5" r="3.2" fill="#FF0000"/>
<circle cx="175.5" cy="146" r="3.2" fill="#FF0000"/>
<circle cx="183.5" cy="153" r="3.2" fill="#FF0000"/>
<circle cx="191.5" cy="163.8" r="3.2" fill="#FF0000"/>
<circle cx="199.5" cy="174.9" r="3.2" fill="#FF0000"/>
<circle cx="207.5" cy="185" r="3.2" fill="#FF0000"/>
<circle cx="215.5" cy="194" r="3.2" fill="#FF0000"/>
<circle cx="223.5" cy="205" r="3.2" fill="#FF0000"/>
<circle cx="231.5" cy="216.8" r="3.2" fill="#FF0000"/>
<circle cx="239.5" cy="227.6" r="3.2" fill="#FF0000"/>
<circle cx="247.5" cy="239" r="3.2" fill="#FF0000"/>
<circle cx="255.5" cy="249" r="3.2" fill="#FF0000"/>
<circle cx="263.5" cy="257.8" r="3.2" fill="#FF0000"/>
<circle cx="271.5" cy="265.5" r="3.2" fill="#FF0000"/>
<circle cx="279.5" cy="272.8" r="3.2" fill="#FF0000"/>
<circle cx="287.5" cy="280" r="3.2" fill="#FF0000"/>
<circle cx="295.5" cy="286" r="3.2" fill="#FF0000"/>
<circle cx="303.5" cy="292.8" r="3.2" fill="#FF0000"/>
<circle cx="311.5" cy="299.5" r="3.2" fill="#FF0000"/>
<circle cx="319.5" cy="305" r="3.2" fill="#FF0000"/>
<circle cx="327.5" cy="311" r="3.2" fill="#FF0000"/>
<circle cx="335.5" cy="315" r="3.2" fill="#FF0000"/>
<circle cx="343.5" cy="320" r="3.2" fill="#FF0000"/>
<circle cx="351.5" cy="323.3" r="3.2" fill="#FF0000"/>
<circle cx="359.5" cy="327" r="3.2" fill="#FF0000"/>
<circle cx="503.5" cy="270.2" r="3.2" fill="#FF0000"/>
<circle cx="511.5" cy="274.7" r="3.2" fill="#FF0000"/>
<circle cx="519.5" cy="279" r="3.2" fill="#FF0000"/>
<circle cx="527.5" cy="285" r="3.2" fill="#FF0000"/>
<circle cx="591.5" cy="226" r="3.2" fill="#FF0000"/>
<circle cx="599.5" cy="231.8" r="3.2" fill="#FF0000"/>
<circle cx="607.5" cy="238.7" r="3.2" fill="#FF0000"/>
<circle cx="615.5" cy="245" r="3.2" fill="#FF0000"/>
<circle cx="623.5" cy="250" r="3.2" fill="#FF0000"/>
<circle cx="631.5" cy="255.8" r="3.2" fill="#FF0000"/>
<circle cx="639.5" cy="259.9" r="3.2" fill="#FF0000"/>
<circle cx="647.5" cy="264.6" r="3.2" fill="#FF0000"/>
<circle cx="703.5" cy="247.7" r="3.2" fill="#FF0000"/>
<circle cx="711.5" cy="252.8" r="3.2" fill="#FF0000"/>
<circle cx="719.5" cy="257.8" r="3.2" fill="#FF0000"/>
<circle cx="727.5" cy="263.4" r="3.2" fill="#FF0000"/>
<circle cx="735.5" cy="269" r="3.2" fill="#FF0000"/>
<circle cx="743.5" cy="274.4" r="3.2" fill="#FF0000"/>
<circle cx="751.5" cy="279.7" r="3.2" fill="#FF0000"/>
<circle cx="759.5" cy="284.3" r="3.2" fill="#FF0000"/>
<circle cx="767.5" cy="288.2" r="3.2" fill="#FF0000"/>
<circle cx="775.5" cy="292.2" r="3.2" fill="#FF0000"/>
<circle cx="783.5" cy="296.5" r="3.2" fill="#FF0000"/>
<circle cx="791.5" cy="300.8" r="3.2" fill="#FF0000"/>
<circle cx="799.5" cy="304.8" r="3.2" fill="#FF0000"/>
<circle cx="807.5" cy="309.6" r="3.2" fill="#FF0000"/>
<circle cx="815.5" cy="314.2" r="3.2" fill="#FF0000"/>
<circle cx="823.5" cy="318" r="3.2" fill="#FF0000"/>
<circle cx="831.5" cy="321.7" r="3.2" fill="#FF0000"/>
<circle cx="839.5" cy="325.5" r="3.2" fill="#FF0000"/>
<circle cx="847.5" cy="330.6" r="3.2" fill="#FF0000"/>
<circle cx="855.5" cy="335" r="3.2" fill="#FF0000"/>
<circle cx="863.5" cy="339.4" r="3.2" fill="#FF0000"/>
<circle cx="871.5" cy="343.2" r="3.2" fill="#FF0000"/>
<circle cx="879.5" cy="347" r="3.2" fill="#FF0000"/>
<circle cx="887.5" cy="351.5" r="3.2" fill="#FF0000"/>
<circle cx="895.5" cy="357" r="3.2" fill="#FF0000"/>
<circle cx="903.5" cy="361.6" r="3.2" fill="#FF0000"/>
<circle cx="911.5" cy="366" r="3.2" fill="#FF0000"/>
<circle cx="919.5" cy="371" r="3.2" fill="#FF0000"/>
<circle cx="927.5" cy="374.2" r="3.2" fill="#FF0000"/>
<circle cx="935.5" cy="378" r="3.2" fill="#FF0000"/>
<circle cx="943.5" cy="381.6" r="3.2" fill="#FF0000"/>
<circle cx="951.5" cy="384.8" r="3.2" fill="#FF0000"/>
<circle cx="959.5" cy="387.4" r="3.2" fill="#FF0000"/>
<circle cx="967.5" cy="389.9" r="3.2" fill="#FF0000"/>
<circle cx="999.5" cy="372.9" r="3.2" fill="#FF0000"/>
<circle cx="1007.5" cy="377.2" r="3.2" fill="#FF0000"/>
<circle cx="1015.5" cy="382.5" r="3.2" fill="#FF0000"/>
<circle cx="1023.5" cy="386.8" r="3.2" fill="#FF0000"/>
<circle cx="1031.5" cy="390.6" r="3.2" fill="#FF0000"/>
<circle cx="1039.5" cy="393.9" r="3.2" fill="#FF0000"/>
<circle cx="1047.5" cy="396.9" r="3.2" fill="#FF0000"/>
<circle cx="1055.5" cy="400.7" r="3.2" fill="#FF0000"/>
<circle cx="1063.5" cy="404" r="3.2" fill="#FF0000"/>
<circle cx="1071.5" cy="407" r="3.2" fill="#FF0000"/>
<circle cx="1079.5" cy="410.8" r="3.2" fill="#FF0000"/>
<circle cx="1087.5" cy="413.8" r="3.2" fill="#FF0000"/>
<circle cx="1095.5" cy="417" r="3.2" fill="#FF0000"/>
<circle cx="1103.5" cy="420.4" r="3.2" fill="#FF0000"/>
<circle cx="1111.5" cy="425.9" r="3.2" fill="#FF0000"/>
<circle cx="1119.5" cy="430.2" r="3.2" fill="#FF0000"/>
<circle cx="1127.5" cy="433.9" r="3.2" fill="#FF0000"/>
<circle cx="1135.5" cy="436.8" r="3.2" fill="#FF0000"/>
<circle cx="1143.5" cy="439.9" r="3.2" fill="#FF0000"/>
<circle cx="1151.5" cy="442.9" r="3.2" fill="#FF0000"/>
<circle cx="1159.5" cy="445.8" r="3.2" fill="#FF0000"/>
<circle cx="1167.5" cy="447.9" r="3.2" fill="#FF0000"/>
<circle cx="1175.5" cy="450.4" r="3.2" fill="#FF0000"/>
<circle cx="1183.5" cy="452" r="3.2" fill="#FF0000"/>
<circle cx="1191.5" cy="454" r="3.2" fill="#FF0000"/>
<circle cx="1199.5" cy="456" r="3.2" fill="#FF0000"/>
<circle cx="1207.5" cy="457.6" r="3.2" fill="#FF0000"/>
<circle cx="1215.5" cy="458.9" r="3.2" fill="#FF0000"/>
<circle cx="1223.5" cy="460.9" r="3.2" fill="#FF0000"/>
<circle cx="1231.5" cy="462.9" r="3.2" fill="#FF0000"/>
<circle cx="1239.5" cy="464.8" r="3.2" fill="#FF0000"/>
<circle cx="1247.5" cy="467" r="3.2" fill="#FF0000"/>
<circle cx="1255.5" cy="468.9" r="3.2" fill="#FF0000"/>
<polygon points="22.2,174.6 26.6,169.8 24.4,169.8 24.4,164.3 20.0,164.3 20.0,169.8 17.8,169.8" fill="none" stroke="#d0707c" stroke-width="1.1" stroke-linejoin="miter"/>
<polygon points="54.5,162.6 58.9,157.8 56.7,157.8 56.7,152.3 52.3,152.3 52.3,157.8 50.1,157.8" fill="none" stroke="#d0707c" stroke-width="1.1" stroke-linejoin="miter"/>
<polygon points="86.3,143.5 90.7,138.7 88.5,138.7 88.5,133.2 84.1,133.2 84.1,138.7 81.9,138.7" fill="none" stroke="#d0707c" stroke-width="1.1" stroke-linejoin="miter"/>
<polygon points="118.2,146.7 122.6,141.9 120.4,141.9 120.4,136.4 116.0,136.4 116.0,141.9 113.8,141.9" fill="none" stroke="#d0707c" stroke-width="1.1" stroke-linejoin="miter"/>
<polygon points="134.8,157.6 139.2,152.8 137.0,152.8 137.0,147.3 132.6,147.3 132.6,152.8 130.4,152.8" fill="none" stroke="#d0707c" stroke-width="1.1" stroke-linejoin="miter"/>
<polygon points="158.5,139.1 162.9,134.3 160.7,134.3 160.7,128.8 156.3,128.8 156.3,134.3 154.1,134.3" fill="none" stroke="#d0707c" stroke-width="1.1" stroke-linejoin="miter"/>
<polygon points="214.3,271.4 218.7,266.6 216.5,266.6 216.5,261.1 212.1,261.1 212.1,266.6 209.9,266.6" fill="none" stroke="#d0707c" stroke-width="1.1" stroke-linejoin="miter"/>
<polygon points="254.5,335.1 258.9,330.3 256.7,330.3 256.7,324.8 252.3,324.8 252.3,330.3 250.1,330.3" fill="none" stroke="#d0707c" stroke-width="1.1" stroke-linejoin="miter"/>
<polygon points="278.3,295.7 282.7,290.9 280.5,290.9 280.5,285.4 276.1,285.4 276.1,290.9 273.9,290.9" fill="none" stroke="#d0707c" stroke-width="1.1" stroke-linejoin="miter"/>
<polygon points="318.1,314.5 322.5,309.7 320.3,309.7 320.3,304.2 315.9,304.2 315.9,309.7 313.7,309.7" fill="none" stroke="#d0707c" stroke-width="1.1" stroke-linejoin="miter"/>
<polygon points="334.1,323.1 338.5,318.3 336.3,318.3 336.3,312.8 331.9,312.8 331.9,318.3 329.7,318.3" fill="none" stroke="#d0707c" stroke-width="1.1" stroke-linejoin="miter"/>
<polygon points="390.1,301.1 394.5,296.3 392.3,296.3 392.3,290.8 387.9,290.8 387.9,296.3 385.7,296.3" fill="none" stroke="#d0707c" stroke-width="1.1" stroke-linejoin="miter"/>
<polygon points="422.2,317.1 426.6,312.3 424.4,312.3 424.4,306.8 420.0,306.8 420.0,312.3 417.8,312.3" fill="none" stroke="#d0707c" stroke-width="1.1" stroke-linejoin="miter"/>
<polygon points="462.3,270.1 466.7,265.3 464.5,265.3 464.5,259.8 460.1,259.8 460.1,265.3 457.9,265.3" fill="none" stroke="#d0707c" stroke-width="1.1" stroke-linejoin="miter"/>
<polygon points="549.8,215.1 554.2,210.3 552.0,210.3 552.0,204.8 547.6,204.8 547.6,210.3 545.4,210.3" fill="none" stroke="#d0707c" stroke-width="1.1" stroke-linejoin="miter"/>
<polygon points="591.5,263.1 595.9,258.3 593.7,258.3 593.7,252.8 589.3,252.8 589.3,258.3 587.1,258.3" fill="none" stroke="#d0707c" stroke-width="1.1" stroke-linejoin="miter"/>
<polygon points="614.1,289.1 618.5,284.3 616.3,284.3 616.3,278.8 611.9,278.8 611.9,284.3 609.7,284.3" fill="none" stroke="#d0707c" stroke-width="1.1" stroke-linejoin="miter"/>
<polygon points="686.0,243.1 690.4,238.3 688.2,238.3 688.2,232.8 683.8,232.8 683.8,238.3 681.6,238.3" fill="none" stroke="#d0707c" stroke-width="1.1" stroke-linejoin="miter"/>
<polygon points="758.2,319.1 762.6,314.3 760.4,314.3 760.4,308.8 756.0,308.8 756.0,314.3 753.8,314.3" fill="none" stroke="#d0707c" stroke-width="1.1" stroke-linejoin="miter"/>
<polygon points="814.4,336.9 818.8,332.1 816.6,332.1 816.6,326.6 812.2,326.6 812.2,332.1 810.0,332.1" fill="none" stroke="#d0707c" stroke-width="1.1" stroke-linejoin="miter"/>
<polygon points="870.2,367.1 874.6,362.3 872.4,362.3 872.4,356.8 868.0,356.8 868.0,362.3 865.8,362.3" fill="none" stroke="#d0707c" stroke-width="1.1" stroke-linejoin="miter"/>
<polygon points="909.8,395.1 914.2,390.3 912.0,390.3 912.0,384.8 907.6,384.8 907.6,390.3 905.4,390.3" fill="none" stroke="#d0707c" stroke-width="1.1" stroke-linejoin="miter"/>
<polygon points="934.5,393.7 938.9,388.9 936.7,388.9 936.7,383.4 932.3,383.4 932.3,388.9 930.1,388.9" fill="none" stroke="#d0707c" stroke-width="1.1" stroke-linejoin="miter"/>
<polygon points="958.3,402.9 962.7,398.1 960.5,398.1 960.5,392.6 956.1,392.6 956.1,398.1 953.9,398.1" fill="none" stroke="#d0707c" stroke-width="1.1" stroke-linejoin="miter"/>
<polygon points="990.3,376.7 994.7,371.9 992.5,371.9 992.5,366.4 988.1,366.4 988.1,371.9 985.9,371.9" fill="none" stroke="#d0707c" stroke-width="1.1" stroke-linejoin="miter"/>
<polygon points="1031.5,400.7 1035.9,395.9 1033.7,395.9 1033.7,390.4 1029.3,390.4 1029.3,395.9 1027.1,395.9" fill="none" stroke="#d0707c" stroke-width="1.1" stroke-linejoin="miter"/>
<polygon points="1093.5,438.1 1097.9,433.3 1095.7,433.3 1095.7,427.8 1091.3,427.8 1091.3,433.3 1089.1,433.3" fill="none" stroke="#d0707c" stroke-width="1.1" stroke-linejoin="miter"/>
<polygon points="1125.9,446.1 1130.3,441.3 1128.1,441.3 1128.1,435.8 1123.7,435.8 1123.7,441.3 1121.5,441.3" fill="none" stroke="#d0707c" stroke-width="1.1" stroke-linejoin="miter"/>
<polygon points="1150.5,458.8 1154.9,454.0 1152.7,454.0 1152.7,448.5 1148.3,448.5 1148.3,454.0 1146.1,454.0" fill="none" stroke="#d0707c" stroke-width="1.1" stroke-linejoin="miter"/>
<polygon points="1166.4,459.9 1170.8,455.1 1168.6,455.1 1168.6,449.6 1164.2,449.6 1164.2,455.1 1162.0,455.1" fill="none" stroke="#d0707c" stroke-width="1.1" stroke-linejoin="miter"/>
<polygon points="1190.3,463.8 1194.7,459.0 1192.5,459.0 1192.5,453.5 1188.1,453.5 1188.1,459.0 1185.9,459.0" fill="none" stroke="#d0707c" stroke-width="1.1" stroke-linejoin="miter"/>
<polygon points="1214.3,469.3 1218.7,464.5 1216.5,464.5 1216.5,459.0 1212.1,459.0 1212.1,464.5 1209.9,464.5" fill="none" stroke="#d0707c" stroke-width="1.1" stroke-linejoin="miter"/>
<polygon points="1246.5,469.3 1250.9,464.5 1248.7,464.5 1248.7,459.0 1244.3,459.0 1244.3,464.5 1242.1,464.5" fill="none" stroke="#d0707c" stroke-width="1.1" stroke-linejoin="miter"/>
<polygon points="15.5,198.1 19.9,202.9 17.7,202.9 17.7,208.4 13.3,208.4 13.3,202.9 11.1,202.9" fill="none" stroke="#0a9ce0" stroke-width="1.1" stroke-linejoin="miter"/>
<polygon points="31.5,212.1 35.9,216.9 33.7,216.9 33.7,222.4 29.3,222.4 29.3,216.9 27.1,216.9" fill="none" stroke="#0a9ce0" stroke-width="1.1" stroke-linejoin="miter"/>
<polygon points="63.5,190.4 67.9,195.2 65.7,195.2 65.7,200.7 61.3,200.7 61.3,195.2 59.1,195.2" fill="none" stroke="#0a9ce0" stroke-width="1.1" stroke-linejoin="miter"/>
<polygon points="103.7,180.0 108.1,184.8 105.9,184.8 105.9,190.3 101.5,190.3 101.5,184.8 99.3,184.8" fill="none" stroke="#0a9ce0" stroke-width="1.1" stroke-linejoin="miter"/>
<polygon points="127.5,172.9 131.9,177.7 129.7,177.7 129.7,183.2 125.3,183.2 125.3,177.7 123.1,177.7" fill="none" stroke="#0a9ce0" stroke-width="1.1" stroke-linejoin="miter"/>
<polygon points="143.5,179.4 147.9,184.2 145.7,184.2 145.7,189.7 141.3,189.7 141.3,184.2 139.1,184.2" fill="none" stroke="#0a9ce0" stroke-width="1.1" stroke-linejoin="miter"/>
<polygon points="207.5,316.9 211.9,321.7 209.7,321.7 209.7,327.2 205.3,327.2 205.3,321.7 203.1,321.7" fill="none" stroke="#0a9ce0" stroke-width="1.1" stroke-linejoin="miter"/>
<polygon points="239.5,365.9 243.9,370.7 241.7,370.7 241.7,376.2 237.3,376.2 237.3,370.7 235.1,370.7" fill="none" stroke="#0a9ce0" stroke-width="1.1" stroke-linejoin="miter"/>
<polygon points="263.5,369.9 267.9,374.7 265.7,374.7 265.7,380.2 261.3,380.2 261.3,374.7 259.1,374.7" fill="none" stroke="#0a9ce0" stroke-width="1.1" stroke-linejoin="miter"/>
<polygon points="303.5,386.9 307.9,391.7 305.7,391.7 305.7,397.2 301.3,397.2 301.3,391.7 299.1,391.7" fill="none" stroke="#0a9ce0" stroke-width="1.1" stroke-linejoin="miter"/>
<polygon points="327.5,355.9 331.9,360.7 329.7,360.7 329.7,366.2 325.3,366.2 325.3,360.7 323.1,360.7" fill="none" stroke="#0a9ce0" stroke-width="1.1" stroke-linejoin="miter"/>
<polygon points="351.5,357.9 355.9,362.7 353.7,362.7 353.7,368.2 349.3,368.2 349.3,362.7 347.1,362.7" fill="none" stroke="#0a9ce0" stroke-width="1.1" stroke-linejoin="miter"/>
<polygon points="415.5,335.9 419.9,340.7 417.7,340.7 417.7,346.2 413.3,346.2 413.3,340.7 411.1,340.7" fill="none" stroke="#0a9ce0" stroke-width="1.1" stroke-linejoin="miter"/>
<polygon points="431.5,339.9 435.9,344.7 433.7,344.7 433.7,350.2 429.3,350.2 429.3,344.7 427.1,344.7" fill="none" stroke="#0a9ce0" stroke-width="1.1" stroke-linejoin="miter"/>
<polygon points="527.5,351.2 531.9,356.0 529.7,356.0 529.7,361.5 525.3,361.5 525.3,356.0 523.1,356.0" fill="none" stroke="#0a9ce0" stroke-width="1.1" stroke-linejoin="miter"/>
<polygon points="583.5,286.5 587.9,291.3 585.7,291.3 585.7,296.8 581.3,296.8 581.3,291.3 579.1,291.3" fill="none" stroke="#0a9ce0" stroke-width="1.1" stroke-linejoin="miter"/>
<polygon points="607.5,334.5 611.9,339.3 609.7,339.3 609.7,344.8 605.3,344.8 605.3,339.3 603.1,339.3" fill="none" stroke="#0a9ce0" stroke-width="1.1" stroke-linejoin="miter"/>
<polygon points="623.5,335.9 627.9,340.7 625.7,340.7 625.7,346.2 621.3,346.2 621.3,340.7 619.1,340.7" fill="none" stroke="#0a9ce0" stroke-width="1.1" stroke-linejoin="miter"/>
<polygon points="743.4,345.3 747.8,350.1 745.6,350.1 745.6,355.6 741.2,355.6 741.2,350.1 739.0,350.1" fill="none" stroke="#0a9ce0" stroke-width="1.1" stroke-linejoin="miter"/>
<polygon points="799.5,375.2 803.9,380.0 801.7,380.0 801.7,385.5 797.3,385.5 797.3,380.0 795.1,380.0" fill="none" stroke="#0a9ce0" stroke-width="1.1" stroke-linejoin="miter"/>
<polygon points="855.5,392.4 859.9,397.2 857.7,397.2 857.7,402.7 853.3,402.7 853.3,397.2 851.1,397.2" fill="none" stroke="#0a9ce0" stroke-width="1.1" stroke-linejoin="miter"/>
<polygon points="895.5,430.2 899.9,435.0 897.7,435.0 897.7,440.5 893.3,440.5 893.3,435.0 891.1,435.0" fill="none" stroke="#0a9ce0" stroke-width="1.1" stroke-linejoin="miter"/>
<polygon points="919.5,425.9 923.9,430.7 921.7,430.7 921.7,436.2 917.3,436.2 917.3,430.7 915.1,430.7" fill="none" stroke="#0a9ce0" stroke-width="1.1" stroke-linejoin="miter"/>
<polygon points="951.5,430.3 955.9,435.1 953.7,435.1 953.7,440.6 949.3,440.6 949.3,435.1 947.1,435.1" fill="none" stroke="#0a9ce0" stroke-width="1.1" stroke-linejoin="miter"/>
<polygon points="975.5,432.8 979.9,437.6 977.7,437.6 977.7,443.1 973.3,443.1 973.3,437.6 971.1,437.6" fill="none" stroke="#0a9ce0" stroke-width="1.1" stroke-linejoin="miter"/>
<polygon points="1015.5,430.3 1019.9,435.1 1017.7,435.1 1017.7,440.6 1013.3,440.6 1013.3,435.1 1011.1,435.1" fill="none" stroke="#0a9ce0" stroke-width="1.1" stroke-linejoin="miter"/>
<polygon points="1071.5,466.2 1075.9,471.0 1073.7,471.0 1073.7,476.5 1069.3,476.5 1069.3,471.0 1067.1,471.0" fill="none" stroke="#0a9ce0" stroke-width="1.1" stroke-linejoin="miter"/>
<polygon points="1111.5,485.9 1115.9,490.7 1113.7,490.7 1113.7,496.2 1109.3,496.2 1109.3,490.7 1107.1,490.7" fill="none" stroke="#0a9ce0" stroke-width="1.1" stroke-linejoin="miter"/>
<polygon points="1143.5,482.3 1147.9,487.1 1145.7,487.1 1145.7,492.6 1141.3,492.6 1141.3,487.1 1139.1,487.1" fill="none" stroke="#0a9ce0" stroke-width="1.1" stroke-linejoin="miter"/>
<polygon points="1159.7,481.2 1164.1,486.0 1161.9,486.0 1161.9,491.5 1157.5,491.5 1157.5,486.0 1155.3,486.0" fill="none" stroke="#0a9ce0" stroke-width="1.1" stroke-linejoin="miter"/>
<polygon points="1183.7,480.1 1188.1,484.9 1185.9,484.9 1185.9,490.4 1181.5,490.4 1181.5,484.9 1179.3,484.9" fill="none" stroke="#0a9ce0" stroke-width="1.1" stroke-linejoin="miter"/>
<polygon points="1207.8,496.6 1212.2,501.4 1210.0,501.4 1210.0,506.9 1205.6,506.9 1205.6,501.4 1203.4,501.4" fill="none" stroke="#0a9ce0" stroke-width="1.1" stroke-linejoin="miter"/>
<polygon points="1231.7,498.9 1236.1,503.7 1233.9,503.7 1233.9,509.2 1229.5,509.2 1229.5,503.7 1227.3,503.7" fill="none" stroke="#0a9ce0" stroke-width="1.1" stroke-linejoin="miter"/>
<circle cx="15.5" cy="152.6" r="5.8" fill="#E07896"/><ellipse cx="15.5" cy="152.6" rx="2.5" ry="3.6" fill="none" stroke="#15081c" stroke-width="1.4"/>
<circle cx="175.5" cy="201.4" r="5.8" fill="#E07896"/><ellipse cx="175.5" cy="201.4" rx="2.5" ry="3.6" fill="none" stroke="#15081c" stroke-width="1.4"/>
<circle cx="503.5" cy="287.4" r="5.8" fill="#E07896"/><ellipse cx="503.5" cy="287.4" rx="2.5" ry="3.6" fill="none" stroke="#15081c" stroke-width="1.4"/>
<circle cx="607.5" cy="269.2" r="5.8" fill="#E07896"/><ellipse cx="607.5" cy="269.2" rx="2.5" ry="3.6" fill="none" stroke="#15081c" stroke-width="1.4"/>
<circle cx="719.4" cy="282.8" r="5.8" fill="#E07896"/><ellipse cx="719.4" cy="282.8" rx="2.5" ry="3.6" fill="none" stroke="#15081c" stroke-width="1.4"/>
<circle cx="1055.5" cy="405" r="5.8" fill="#E07896"/><ellipse cx="1055.5" cy="405" rx="2.5" ry="3.6" fill="none" stroke="#15081c" stroke-width="1.4"/>
<circle cx="-0.5" cy="210.8" r="5.8" fill="#00B4F8"/><ellipse cx="-0.5" cy="210.8" rx="2.5" ry="3.6" fill="none" stroke="#15081c" stroke-width="1.4"/>
<circle cx="63.5" cy="206.8" r="5.8" fill="#00B4F8"/><ellipse cx="63.5" cy="206.8" rx="2.5" ry="3.6" fill="none" stroke="#15081c" stroke-width="1.4"/>
<circle cx="327.3" cy="378" r="5.8" fill="#00B4F8"/><ellipse cx="327.3" cy="378" rx="2.5" ry="3.6" fill="none" stroke="#15081c" stroke-width="1.4"/>
<circle cx="559.5" cy="284" r="5.8" fill="#00B4F8"/><ellipse cx="559.5" cy="284" rx="2.5" ry="3.6" fill="none" stroke="#15081c" stroke-width="1.4"/>
<circle cx="663.5" cy="306.3" r="5.8" fill="#00B4F8"/><ellipse cx="663.5" cy="306.3" rx="2.5" ry="3.6" fill="none" stroke="#15081c" stroke-width="1.4"/>
<circle cx="983.5" cy="418.4" r="5.8" fill="#00B4F8"/><ellipse cx="983.5" cy="418.4" rx="2.5" ry="3.6" fill="none" stroke="#15081c" stroke-width="1.4"/>
<text x="1158.2" y="490.3" font-size="20" fill="#fff" stroke="#fff" stroke-width="0.35" textLength="89" lengthAdjust="spacingAndGlyphs">|M5=3:52</text>
</g>
<g clip-path="url(#c2)">
<polygon points="31.5,632.8 37.2,638.0 37.2,641.6 33.2,639.0 33.2,646.0 29.8,646.0 29.8,639.0 25.8,641.6 25.8,638.0" fill="#32CD32"/>
<polygon points="295.3,645.4 301.0,650.6 301.0,654.2 297.0,651.6 297.0,658.6 293.6,658.6 293.6,651.6 289.6,654.2 289.6,650.6" fill="#32CD32"/>
<polygon points="623.1,615.6 628.8,620.9 628.8,624.5 624.8,621.9 624.8,628.9 621.4,628.9 621.4,621.9 617.4,624.5 617.4,620.9" fill="#32CD32"/>
<polygon points="1007.8,631.0 1013.5,636.2 1013.5,639.9 1009.5,637.2 1009.5,644.2 1006.1,644.2 1006.1,637.2 1002.1,639.9 1002.1,636.2" fill="#32CD32"/>
<polygon points="1239.0,637.8 1244.7,643.0 1244.7,646.6 1240.7,644.0 1240.7,651.0 1237.3,651.0 1237.3,644.0 1233.3,646.6 1233.3,643.0" fill="#32CD32"/>
<polygon points="344.3,637.4 350.0,632.1 350.0,628.5 346.0,631.2 346.0,624.1 342.6,624.1 342.6,631.2 338.6,628.5 338.6,632.1" fill="#FF1010"/>
<polygon points="1031.8,634.1 1037.5,628.9 1037.5,625.2 1033.5,627.9 1033.5,620.9 1030.1,620.9 1030.1,627.9 1026.1,625.2 1026.1,628.9" fill="#FF1010"/>
<polyline points="0,569.5 5,575.8 12.6,591 22.7,608.6 31.5,615.4" fill="none" stroke="#F4A460" stroke-width="2" stroke-linejoin="round" shape-rendering="crispEdges" stroke-linecap="round"/>
<polyline points="31.5,615.4 39,611 46.7,597.2 63,579.6 73.2,563 79.5,553 87,549.3" fill="none" stroke="#1E90FF" stroke-width="2" stroke-linejoin="round" shape-rendering="crispEdges" stroke-linecap="round"/>
<polyline points="87,549.3 94.6,554.3 103.5,560" fill="none" stroke="#F4A460" stroke-width="2" stroke-linejoin="round" shape-rendering="crispEdges" stroke-linecap="round"/>
<polyline points="103.5,560 111,560" fill="none" stroke="#1E90FF" stroke-width="2" stroke-linejoin="round" shape-rendering="crispEdges" stroke-linecap="round"/>
<polyline points="111,560 120,563.7 127.4,565.2 136.3,570.7 143.8,572" fill="none" stroke="#F4A460" stroke-width="2" stroke-linejoin="round" shape-rendering="crispEdges" stroke-linecap="round"/>
<polyline points="143.8,572 150.7,570" fill="none" stroke="#1E90FF" stroke-width="2" stroke-linejoin="round" shape-rendering="crispEdges" stroke-linecap="round"/>
<polyline points="150.7,570 159,570 167.8,580.8 175.4,596 184.2,611 191.8,626.2 199.4,637.6 214.5,640 223.3,640 231,643" fill="none" stroke="#F4A460" stroke-width="2" stroke-linejoin="round" shape-rendering="crispEdges" stroke-linecap="round"/>
<polyline points="231,643 239.7,636.3 247.3,631.8 255,629.5 263.7,621.2 271.3,607.3 278.9,597.2 286.4,594.7" fill="none" stroke="#1E90FF" stroke-width="2" stroke-linejoin="round" shape-rendering="crispEdges" stroke-linecap="round"/>
<polyline points="286.4,594.7 295.3,598" fill="none" stroke="#F4A460" stroke-width="2" stroke-linejoin="round" shape-rendering="crispEdges" stroke-linecap="round"/>
<polyline points="295.3,598 302.8,598 311.7,588.4 316,582 327.4,559.4 343.8,548 358.9,535.4 375.3,519.5" fill="none" stroke="#1E90FF" stroke-width="2" stroke-linejoin="round" shape-rendering="crispEdges" stroke-linecap="round"/>
<polyline points="375.3,519.5 382.9,522.8 390.4,532.9 399.3,554.3 406.9,569.5 415.7,577 423.3,583.8 432,583.8" fill="none" stroke="#F4A460" stroke-width="2" stroke-linejoin="round" shape-rendering="crispEdges" stroke-linecap="round"/>
<polyline points="432,583.8 439.7,578.3 447.2,570.7 456,558 463.6,555.6" fill="none" stroke="#1E90FF" stroke-width="2" stroke-linejoin="round" shape-rendering="crispEdges" stroke-linecap="round"/>
<polyline points="463.6,555.6 471.2,561.9 480,578.3 487.6,594.7 502.8,612.4 510.3,621.2 519.2,630.8 528,630.8" fill="none" stroke="#F4A460" stroke-width="2" stroke-linejoin="round" shape-rendering="crispEdges" stroke-linecap="round"/>
<polyline points="528,630.8 535.6,621.2 543.1,606 552,594 559.5,592.7" fill="none" stroke="#1E90FF" stroke-width="2" stroke-linejoin="round" shape-rendering="crispEdges" stroke-linecap="round"/>
<polyline points="559.5,592.7 567,596 574.7,603.5 583.5,616 591,628.8 598.6,640" fill="none" stroke="#F4A460" stroke-width="2" stroke-linejoin="round" shape-rendering="crispEdges" stroke-linecap="round"/>
<polyline points="598.6,640 607.5,639.4 615,637.6 622.6,628.8 630.2,611 632,606 639.6,585.9 647,565.7 656,544.2 663.5,527.8 671,514.7 679.4,514.7" fill="none" stroke="#1E90FF" stroke-width="2" stroke-linejoin="round" shape-rendering="crispEdges" stroke-linecap="round"/>
<polyline points="679.4,514.7 687.5,525.3 695,543 704,568.2 711.5,593.4 719,613.6 728,636.3 735.5,649.5 744.3,651" fill="none" stroke="#F4A460" stroke-width="2" stroke-linejoin="round" shape-rendering="crispEdges" stroke-linecap="round"/>
<polyline points="744.3,651 752,641.4 759.4,631.3 768.3,625 775.8,625" fill="none" stroke="#1E90FF" stroke-width="2" stroke-linejoin="round" shape-rendering="crispEdges" stroke-linecap="round"/>
<polyline points="775.8,625 783.4,628 791,633.3" fill="none" stroke="#F4A460" stroke-width="2" stroke-linejoin="round" shape-rendering="crispEdges" stroke-linecap="round"/>
<polyline points="791,633.3 799.8,630.8 807.4,618.7 816.2,609 823.8,605.6" fill="none" stroke="#1E90FF" stroke-width="2" stroke-linejoin="round" shape-rendering="crispEdges" stroke-linecap="round"/>
<polyline points="823.8,605.6 831.4,606.6 839,613.6 847.8,622" fill="none" stroke="#F4A460" stroke-width="2" stroke-linejoin="round" shape-rendering="crispEdges" stroke-linecap="round"/>
<polyline points="847.8,622 855.3,622 863,613 871.7,604 879.3,602.8" fill="none" stroke="#1E90FF" stroke-width="2" stroke-linejoin="round" shape-rendering="crispEdges" stroke-linecap="round"/>
<polyline points="879.3,602.8 886.9,605.3 895.7,611.9" fill="none" stroke="#F4A460" stroke-width="2" stroke-linejoin="round" shape-rendering="crispEdges" stroke-linecap="round"/>
<polyline points="895.7,611.9 904,611.9 912,603 919.7,585.9 927.3,570.2 934.8,561" fill="none" stroke="#1E90FF" stroke-width="2" stroke-linejoin="round" shape-rendering="crispEdges" stroke-linecap="round"/>
<polyline points="934.8,561 943.7,561.9 948,561.9 959.4,567 968.2,578.3 975.8,583.3" fill="none" stroke="#F4A460" stroke-width="2" stroke-linejoin="round" shape-rendering="crispEdges" stroke-linecap="round"/>
<polyline points="975.8,583.3 983.3,581.6" fill="none" stroke="#1E90FF" stroke-width="2" stroke-linejoin="round" shape-rendering="crispEdges" stroke-linecap="round"/>
<polyline points="983.3,581.6 991,582 999.7,588.4 1007.3,598.5 1014.9,601" fill="none" stroke="#F4A460" stroke-width="2" stroke-linejoin="round" shape-rendering="crispEdges" stroke-linecap="round"/>
<polyline points="1014.9,601 1023.7,597.2 1031.3,594.7" fill="none" stroke="#1E90FF" stroke-width="2" stroke-linejoin="round" shape-rendering="crispEdges" stroke-linecap="round"/>
<polyline points="1031.3,594.7 1038.9,597.2 1047.7,606 1055.3,616 1062.8,626.2 1070.4,636.3 1080.5,636.8" fill="none" stroke="#F4A460" stroke-width="2" stroke-linejoin="round" shape-rendering="crispEdges" stroke-linecap="round"/>
<polyline points="1080.5,636.8 1088,626.2 1095.6,617.4 1103.2,613.6 1112,606 1119.6,593.4 1127.7,584.6" fill="none" stroke="#1E90FF" stroke-width="2" stroke-linejoin="round" shape-rendering="crispEdges" stroke-linecap="round"/>
<polyline points="1127.7,584.6 1136,584.6" fill="none" stroke="#F4A460" stroke-width="2" stroke-linejoin="round" shape-rendering="crispEdges" stroke-linecap="round"/>
<polyline points="1136,584.6 1143.6,583.3" fill="none" stroke="#1E90FF" stroke-width="2" stroke-linejoin="round" shape-rendering="crispEdges" stroke-linecap="round"/>
<polyline points="1143.6,583.3 1152.4,584.6" fill="none" stroke="#F4A460" stroke-width="2" stroke-linejoin="round" shape-rendering="crispEdges" stroke-linecap="round"/>
<polyline points="1152.4,584.6 1160,582.6" fill="none" stroke="#1E90FF" stroke-width="2" stroke-linejoin="round" shape-rendering="crispEdges" stroke-linecap="round"/>
<polyline points="1160,582.6 1167.6,584.6 1175,590.4 1184,591.4 1191.5,594.7 1199,601.5 1208,602.8 1215.5,604.8 1223,609" fill="none" stroke="#F4A460" stroke-width="2" stroke-linejoin="round" shape-rendering="crispEdges" stroke-linecap="round"/>
<polyline points="1223,609 1230.6,607.8 1239.5,598.5 1247,585.9 1255,576.5" fill="none" stroke="#1E90FF" stroke-width="2" stroke-linejoin="round" shape-rendering="crispEdges" stroke-linecap="round"/>
<polyline points="0,619.2 7.6,623.7 15,628.3 24,633.8 31.5,637.6" fill="none" stroke="#FF8C00" stroke-width="2" stroke-linejoin="round" shape-rendering="crispEdges" stroke-linecap="round"/>
<polyline points="31.5,637.6 37.9,637.6 46.7,633.3 58,629.3 63,628.8 73.2,623.7 79.5,620 87,617.4 94.6,616.7 103.5,615.6 111,613.6 120,611.6 127.4,609.8 136.3,608.6 143.8,602.3 150.7,594.7 159,587.9" fill="none" stroke="#0000FF" stroke-width="2" stroke-linejoin="round" shape-rendering="crispEdges" stroke-linecap="round"/>
<polyline points="159,587.9 166.6,601 175.4,618.7 184.2,630 191.8,636.3 199.4,642.7 207,643.2 214.5,647.7 223.3,650.2 231,652" fill="none" stroke="#FF8C00" stroke-width="2" stroke-linejoin="round" shape-rendering="crispEdges" stroke-linecap="round"/>
<polyline points="231,652 247.3,652" fill="none" stroke="#0000FF" stroke-width="2" stroke-linejoin="round" shape-rendering="crispEdges" stroke-linecap="round"/>
<polyline points="247.3,652 255,653.3" fill="none" stroke="#FF8C00" stroke-width="2" stroke-linejoin="round" shape-rendering="crispEdges" stroke-linecap="round"/>
<polyline points="255,653.3 263.7,653.3 271.3,642.7" fill="none" stroke="#0000FF" stroke-width="2" stroke-linejoin="round" shape-rendering="crispEdges" stroke-linecap="round"/>
<polyline points="271.3,642.7 278.9,646 287.7,649.5 295.3,650.7" fill="none" stroke="#FF8C00" stroke-width="2" stroke-linejoin="round" shape-rendering="crispEdges" stroke-linecap="round"/>
<polyline points="295.3,650.7 302.8,646 311.7,640 317.3,636 327.4,633 343.8,631.8" fill="none" stroke="#0000FF" stroke-width="2" stroke-linejoin="round" shape-rendering="crispEdges" stroke-linecap="round"/>
<polyline points="343.8,631.8 360,631.8" fill="none" stroke="#FF8C00" stroke-width="2" stroke-linejoin="round" shape-rendering="crispEdges" stroke-linecap="round"/>
<polyline points="360,631.8 375.3,631.3 391.7,627.5 406.9,626.7 423.3,625.7 432,625 439.7,622.5 447.2,617.4 456,606 463.6,593.4 471.2,579.6 480,569.5 495.2,558.6" fill="none" stroke="#0000FF" stroke-width="2" stroke-linejoin="round" shape-rendering="crispEdges" stroke-linecap="round"/>
<polyline points="495.2,558.6 502.8,561.9 511.6,567 519.2,575.8 528,583.3" fill="none" stroke="#FF8C00" stroke-width="2" stroke-linejoin="round" shape-rendering="crispEdges" stroke-linecap="round"/>
<polyline points="528,583.3 535.6,578.3 543.1,565.7 552,556.8 559.5,552.5" fill="none" stroke="#0000FF" stroke-width="2" stroke-linejoin="round" shape-rendering="crispEdges" stroke-linecap="round"/>
<polyline points="559.5,552.5 567,559.4 574.7,563 583.5,573.2 591,588.4 598.6,602.3 607.5,613.6 615,620 622.6,620.4" fill="none" stroke="#FF8C00" stroke-width="2" stroke-linejoin="round" shape-rendering="crispEdges" stroke-linecap="round"/>
<polyline points="622.6,620.4 630.2,618.7 632,618 639.6,612.4 647,603.5 656,596 663.5,587 671,580.8 679.4,576.3" fill="none" stroke="#0000FF" stroke-width="2" stroke-linejoin="round" shape-rendering="crispEdges" stroke-linecap="round"/>
<polyline points="679.4,576.3 687.5,580.3 695,586.4 704,597.2 711.5,606 719,616 728,626.2 735.5,633.3 744.3,635.8" fill="none" stroke="#FF8C00" stroke-width="2" stroke-linejoin="round" shape-rendering="crispEdges" stroke-linecap="round"/>
<polyline points="744.3,635.8 759.4,635.8 763,634.6 768.3,635" fill="none" stroke="#0000FF" stroke-width="2" stroke-linejoin="round" shape-rendering="crispEdges" stroke-linecap="round"/>
<polyline points="768.3,635 775.8,638.9 783.4,642.7 791,645.7 799.8,646" fill="none" stroke="#FF8C00" stroke-width="2" stroke-linejoin="round" shape-rendering="crispEdges" stroke-linecap="round"/>
<polyline points="799.8,646 807.4,644.4" fill="none" stroke="#0000FF" stroke-width="2" stroke-linejoin="round" shape-rendering="crispEdges" stroke-linecap="round"/>
<polyline points="807.4,644.4 816.2,646" fill="none" stroke="#FF8C00" stroke-width="2" stroke-linejoin="round" shape-rendering="crispEdges" stroke-linecap="round"/>
<polyline points="816.2,646 831.4,646" fill="none" stroke="#0000FF" stroke-width="2" stroke-linejoin="round" shape-rendering="crispEdges" stroke-linecap="round"/>
<polyline points="831.4,646 839,647.2 847.8,649.7" fill="none" stroke="#FF8C00" stroke-width="2" stroke-linejoin="round" shape-rendering="crispEdges" stroke-linecap="round"/>
<polyline points="847.8,649.7 855.3,649.5 863,648.2 871.7,647.2 879.3,647" fill="none" stroke="#0000FF" stroke-width="2" stroke-linejoin="round" shape-rendering="crispEdges" stroke-linecap="round"/>
<polyline points="879.3,647 886.9,647 895.7,649 904,652" fill="none" stroke="#FF8C00" stroke-width="2" stroke-linejoin="round" shape-rendering="crispEdges" stroke-linecap="round"/>
<polyline points="904,652 912,651 919.7,650.2 927.3,649 934.8,648.5" fill="none" stroke="#0000FF" stroke-width="2" stroke-linejoin="round" shape-rendering="crispEdges" stroke-linecap="round"/>
<polyline points="934.8,648.5 943.7,649.5 948,651.5 959.4,652.7 968.2,653.3" fill="none" stroke="#FF8C00" stroke-width="2" stroke-linejoin="round" shape-rendering="crispEdges" stroke-linecap="round"/>
<polyline points="968.2,653.3 975.8,649 983.3,638.9 991,633.3" fill="none" stroke="#0000FF" stroke-width="2" stroke-linejoin="round" shape-rendering="crispEdges" stroke-linecap="round"/>
<polyline points="991,633.3 999.7,633.3 1007.3,635" fill="none" stroke="#FF8C00" stroke-width="2" stroke-linejoin="round" shape-rendering="crispEdges" stroke-linecap="round"/>
<polyline points="1007.3,635 1014.9,633.3 1023.7,630 1031.3,629.5" fill="none" stroke="#0000FF" stroke-width="2" stroke-linejoin="round" shape-rendering="crispEdges" stroke-linecap="round"/>
<polyline points="1031.3,629.5 1038.9,630.8 1047.7,631.3 1055.3,636.3 1062.8,638.9 1070.4,641.4 1080.5,641.4" fill="none" stroke="#FF8C00" stroke-width="2" stroke-linejoin="round" shape-rendering="crispEdges" stroke-linecap="round"/>
<polyline points="1080.5,641.4 1086.8,641.9" fill="none" stroke="#0000FF" stroke-width="2" stroke-linejoin="round" shape-rendering="crispEdges" stroke-linecap="round"/>
<polyline points="1086.8,641.9 1095.6,643.9 1103.2,649" fill="none" stroke="#FF8C00" stroke-width="2" stroke-linejoin="round" shape-rendering="crispEdges" stroke-linecap="round"/>
<polyline points="1103.2,649 1112,646.4 1119.6,638.4 1127.7,637.6" fill="none" stroke="#0000FF" stroke-width="2" stroke-linejoin="round" shape-rendering="crispEdges" stroke-linecap="round"/>
<polyline points="1127.7,637.6 1136,643.9 1143.6,648.5 1152.4,648.5" fill="none" stroke="#FF8C00" stroke-width="2" stroke-linejoin="round" shape-rendering="crispEdges" stroke-linecap="round"/>
<polyline points="1152.4,648.5 1160,648.5" fill="none" stroke="#0000FF" stroke-width="2" stroke-linejoin="round" shape-rendering="crispEdges" stroke-linecap="round"/>
<polyline points="1160,648.5 1167.6,648.5" fill="none" stroke="#FF8C00" stroke-width="2" stroke-linejoin="round" shape-rendering="crispEdges" stroke-linecap="round"/>
<polyline points="1167.6,648.5 1175,645.2 1184,642 1191.5,640" fill="none" stroke="#0000FF" stroke-width="2" stroke-linejoin="round" shape-rendering="crispEdges" stroke-linecap="round"/>
<polyline points="1191.5,640 1199,639.6" fill="none" stroke="#FF8C00" stroke-width="2" stroke-linejoin="round" shape-rendering="crispEdges" stroke-linecap="round"/>
<polyline points="1199,639.6 1208,639.6" fill="none" stroke="#0000FF" stroke-width="2" stroke-linejoin="round" shape-rendering="crispEdges" stroke-linecap="round"/>
<polyline points="1208,639.6 1215.5,640 1223,641.4 1230.6,642.7 1239.5,642.7" fill="none" stroke="#FF8C00" stroke-width="2" stroke-linejoin="round" shape-rendering="crispEdges" stroke-linecap="round"/>
<polyline points="1239.5,642.7 1247,642.7" fill="none" stroke="#0000FF" stroke-width="2" stroke-linejoin="round" shape-rendering="crispEdges" stroke-linecap="round"/>
<polyline points="1247,642.7 1255,643.2" fill="none" stroke="#FF8C00" stroke-width="2" stroke-linejoin="round" shape-rendering="crispEdges" stroke-linecap="round"/>
<polyline points="0,640 31.5,637.6" fill="none" stroke="#32CD32" stroke-width="1" stroke-linejoin="round" shape-rendering="crispEdges" />
<polyline points="232,651.5 294,651.5" fill="none" stroke="#32CD32" stroke-width="1" stroke-linejoin="round" shape-rendering="crispEdges" />
<polyline points="271.3,642 343.8,631.6" fill="none" stroke="#FF0000" stroke-width="1" stroke-linejoin="round" shape-rendering="crispEdges" stroke-dasharray="3 3"/>
<polyline points="528,583.8 622.6,620.4" fill="none" stroke="#32CD32" stroke-width="1" stroke-linejoin="round" shape-rendering="crispEdges" stroke-dasharray="3 3"/>
<polyline points="904,652 952,645 1007.3,635" fill="none" stroke="#32CD32" stroke-width="1" stroke-linejoin="round" shape-rendering="crispEdges" />
<polyline points="948,646.4 1031.3,629.5" fill="none" stroke="#FF0000" stroke-width="1" stroke-linejoin="round" shape-rendering="crispEdges" stroke-dasharray="3 2"/>
<polyline points="1152.4,649 1238,643.4 1257,642" fill="none" stroke="#32CD32" stroke-width="1" stroke-linejoin="round" shape-rendering="crispEdges" />
<text x="3" y="520" font-size="10.1" fill="#fff" textLength="52" lengthAdjust="spacingAndGlyphs" xml:space="preserve">Mfi  79.4330</text>
</g>
<g clip-path="url(#c3)">
<polyline points="0,732.8 15,732 39,735.3 60.6,732 78.2,726.2 93.4,723.2 111,722.7 127.4,720.7 136.3,720.7 143.8,723.2 161.5,721.4 167.8,723.2 175.4,728.7 184.2,735.8 199.4,743.9 215.8,749.7 231,752.2 239.7,752.7 255,751.7 263.7,750.2 271.3,747.2 287.7,741.4 302.8,739.6 316,736.6 323.6,735.8 331,732 343.8,730.8 367.7,729.5 382.9,722.7 391.7,718.7 403,718 415.7,720.2 430.8,723.2 447.2,721.2 454.8,720.7 463.6,717.4 473.7,715 487.6,717.4 495.2,718 505.3,722 519.2,729.5 535.6,735.8 543.1,729.5 552,723.2 559.5,719.4 576,717.4 586,717.4 600,721.2 607.5,725.2 615,728.7 631.5,734 643.4,734 656,730.8 664.8,725.7 680,717.6 692.6,715 704,716.9 711.5,722 720.3,729.5 735.5,738.3 744.3,742.9 759.4,743.9 775.8,742.6 808.7,743.4 851.6,742.9 864.2,741.4 879.3,739 895.7,743.4 910.9,745.4 923.5,745.4 934.8,742 947.5,740 959.4,737 983.3,734.6 991,730.8 999.7,728.7 1047.7,729.5 1060.3,732 1067.9,735.8 1095.6,738.3 1109.5,741.4 1122,740.4 1136,737.8 1167.6,736.6 1191.5,734 1200.4,734 1211.7,736.6 1232,736.6 1255,732.8" fill="none" stroke="#778899" stroke-width="1" stroke-linejoin="round" shape-rendering="crispEdges" stroke-dasharray="3 3"/>
<polyline points="0,759.8 7.6,759.8" fill="none" stroke="#1E90FF" stroke-width="2" stroke-linejoin="round" shape-rendering="crispEdges" stroke-linecap="round"/>
<polyline points="7.6,759.8 22.7,759.8 31.5,762.8 40.4,765.6 48,767.9 55.5,767.9" fill="none" stroke="#F4A460" stroke-width="2" stroke-linejoin="round" shape-rendering="crispEdges" stroke-linecap="round"/>
<polyline points="55.5,767.9 64.4,767.4 72,764.8 79.5,761 87,755.5 96,747.2 103.5,741.4 111,734.6 120,728.2 127.4,722.7 136.3,716.9 143.8,714.4 151.4,710.6 160.3,706 167.8,706" fill="none" stroke="#1E90FF" stroke-width="2" stroke-linejoin="round" shape-rendering="crispEdges" stroke-linecap="round"/>
<polyline points="167.8,706 175.4,711.8 184.2,720.7 191.8,728.2 199.4,737 208.2,745.9 215.8,752.2 223.3,758.5 231,763.6 239.7,768.6 247.3,773.7 255,779.2 263.7,782.5 271.3,786.3 278.9,788.3 287.7,790 295.3,791.3 302.8,792.6 311.7,793.4 319.8,793.9" fill="none" stroke="#F4A460" stroke-width="2" stroke-linejoin="round" shape-rendering="crispEdges" stroke-linecap="round"/>
<polyline points="319.8,793.9 327.4,793.9 335,790 343.8,788 351.3,787.6 358.9,785.5 367.7,782.5 375.3,775 382.9,764.8 391.7,752.2 399.3,742 406.9,733.3 415.7,725.7 423.3,719.4 430.8,716 439.7,713 447.2,708.6 454.8,704.3 463.6,698 471.2,692.4 478.8,687.9 487.6,682.8 495.2,679.8" fill="none" stroke="#1E90FF" stroke-width="2" stroke-linejoin="round" shape-rendering="crispEdges" stroke-linecap="round"/>
<polyline points="495.2,679.8 502.8,679.8 511.6,685.3 519.2,692.9 526.7,701.7 535.6,711.3 543.1,714.9 552,714.9" fill="none" stroke="#F4A460" stroke-width="2" stroke-linejoin="round" shape-rendering="crispEdges" stroke-linecap="round"/>
<polyline points="552,714.9 559.5,714.9 567,711.8 576,708.6 583.5,705.5 591,703 600,703" fill="none" stroke="#1E90FF" stroke-width="2" stroke-linejoin="round" shape-rendering="crispEdges" stroke-linecap="round"/>
<polyline points="600,703 607.5,705.5 615,709.3 623.9,715.6 631.5,722 639.6,728.2 647,732.5 656,735" fill="none" stroke="#F4A460" stroke-width="2" stroke-linejoin="round" shape-rendering="crispEdges" stroke-linecap="round"/>
<polyline points="656,735 664.8,735 672.4,731.3 680,725.7 687.5,720.2 696.4,715 704,711 711.5,710.6" fill="none" stroke="#1E90FF" stroke-width="2" stroke-linejoin="round" shape-rendering="crispEdges" stroke-linecap="round"/>
<polyline points="711.5,710.6 720.3,714.4 727.9,719.4 735.5,725.7 744.3,733.3 751.9,739.6 759.4,745.4 768.3,751 775.8,755.5 783.4,759 791,762.8 799.8,768.1 807.4,772.4 816.2,775.4 823.8,778.7 831.4,782 840.2,784.3 847.8,787.6 855.3,790 864.2,792 871.7,794.4 879.3,795.9 886.9,796.9 895.7,798.9 903.3,800.9 910.9,802.2 919.7,804 927.3,805.2 934.8,806.5 943.7,807 948,807 959.4,809 975.8,809" fill="none" stroke="#F4A460" stroke-width="2" stroke-linejoin="round" shape-rendering="crispEdges" stroke-linecap="round"/>
<polyline points="975.8,809 983.3,808.5 991,801.4 999.7,793.4 1007.3,787.6 1014.9,782.5 1023.7,778.7 1031.3,776.2 1038.9,774.2 1047.7,773.7" fill="none" stroke="#1E90FF" stroke-width="2" stroke-linejoin="round" shape-rendering="crispEdges" stroke-linecap="round"/>
<polyline points="1047.7,773.7 1055.3,773.7 1062.8,776.2 1071.7,778.7 1079.2,781.8 1088,785 1095.6,788 1103.2,790 1112,793 1119.6,794.6 1127.2,796.4 1136,798.4 1143.6,799.4 1152.4,801.4 1160,802.2 1167.6,803.5 1176.4,804.7 1184,805.7 1191.5,806.5 1200.4,807.8 1208,808.3 1215.5,808.5 1224.3,809.8 1232,809.8 1239.5,810.8 1247,810.8 1255,810.8" fill="none" stroke="#F4A460" stroke-width="2" stroke-linejoin="round" shape-rendering="crispEdges" stroke-linecap="round"/>
</g>
<text x="-26" y="831" font-size="9.6" fill="#fff" textLength="50.5" lengthAdjust="spacingAndGlyphs">7 Feb 09:34</text>
<text x="38" y="831" font-size="9.6" fill="#fff" textLength="50.5" lengthAdjust="spacingAndGlyphs">7 Feb 09:42</text>
<text x="102" y="831" font-size="9.6" fill="#fff" textLength="50.5" lengthAdjust="spacingAndGlyphs">7 Feb 09:50</text>
<text x="166" y="831" font-size="9.6" fill="#fff" textLength="50.5" lengthAdjust="spacingAndGlyphs">7 Feb 09:58</text>
<text x="230" y="831" font-size="9.6" fill="#fff" textLength="50.5" lengthAdjust="spacingAndGlyphs">7 Feb 10:06</text>
<text x="294" y="831" font-size="9.6" fill="#fff" textLength="50.5" lengthAdjust="spacingAndGlyphs">7 Feb 10:14</text>
<text x="358" y="831" font-size="9.6" fill="#fff" textLength="50.5" lengthAdjust="spacingAndGlyphs">7 Feb 10:22</text>
<text x="422" y="831" font-size="9.6" fill="#fff" textLength="50.5" lengthAdjust="spacingAndGlyphs">7 Feb 10:30</text>
<text x="486" y="831" font-size="9.6" fill="#fff" textLength="50.5" lengthAdjust="spacingAndGlyphs">7 Feb 10:38</text>
<text x="550" y="831" font-size="9.6" fill="#fff" textLength="50.5" lengthAdjust="spacingAndGlyphs">7 Feb 10:46</text>
<text x="614" y="831" font-size="9.6" fill="#fff" textLength="50.5" lengthAdjust="spacingAndGlyphs">7 Feb 10:54</text>
<text x="678" y="831" font-size="9.6" fill="#fff" textLength="50.5" lengthAdjust="spacingAndGlyphs">7 Feb 11:02</text>
<text x="742" y="831" font-size="9.6" fill="#fff" textLength="50.5" lengthAdjust="spacingAndGlyphs">7 Feb 11:10</text>
<text x="806" y="831" font-size="9.6" fill="#fff" textLength="50.5" lengthAdjust="spacingAndGlyphs">7 Feb 11:18</text>
<text x="870" y="831" font-size="9.6" fill="#fff" textLength="50.5" lengthAdjust="spacingAndGlyphs">7 Feb 11:26</text>
<text x="934" y="831" font-size="9.6" fill="#fff" textLength="50.5" lengthAdjust="spacingAndGlyphs">7 Feb 11:34</text>
<text x="998" y="831" font-size="9.6" fill="#fff" textLength="50.5" lengthAdjust="spacingAndGlyphs">7 Feb 11:42</text>
<text x="1062" y="831" font-size="9.6" fill="#fff" textLength="50.5" lengthAdjust="spacingAndGlyphs">7 Feb 11:50</text>
<text x="1126" y="831" font-size="9.6" fill="#fff" textLength="50.5" lengthAdjust="spacingAndGlyphs">7 Feb 11:58</text>
<text x="1190" y="831" font-size="9.6" fill="#fff" textLength="50.5" lengthAdjust="spacingAndGlyphs">7 Feb 12:06</text>
<text x="1254" y="831" font-size="9.6" fill="#fff" textLength="50.5" lengthAdjust="spacingAndGlyphs">7 Feb 12:14</text>
<text x="1262.5" y="29" font-size="9.7" fill="#fff">1.30</text>
<text x="1262.5" y="63" font-size="9.7" fill="#fff">1.30</text>
<text x="1262.5" y="97" font-size="9.7" fill="#fff">1.30</text>
<text x="1262.5" y="131" font-size="9.7" fill="#fff">1.30</text>
<text x="1262.5" y="165" font-size="9.7" fill="#fff">1.30</text>
<text x="1262.5" y="199" font-size="9.7" fill="#fff">1.30</text>
<text x="1262.5" y="233" font-size="9.7" fill="#fff">1.30</text>
<text x="1262.5" y="267" font-size="9.7" fill="#fff">1.30</text>
<text x="1262.5" y="301" font-size="9.7" fill="#fff">1.30</text>
<text x="1262.5" y="335" font-size="9.7" fill="#fff">1.30</text>
<text x="1262.5" y="369" font-size="9.7" fill="#fff">1.30</text>
<text x="1262.5" y="403" font-size="9.7" fill="#fff">1.30</text>
<text x="1262.5" y="437" font-size="9.7" fill="#fff">1.30</text>
<text x="1262.5" y="471" font-size="9.7" fill="#fff">1.30</text>
<text x="1262.5" y="505" font-size="9.7" fill="#fff">1.30</text>
<text x="1261" y="517.5" font-size="9.6" fill="#fff">0</text>
<text x="1261" y="537.5" font-size="9.6" fill="#fff">90</text>
<text x="1261" y="639.5" font-size="9.6" fill="#fff">10</text>
<text x="1261" y="658" font-size="9.6" fill="#fff">-1</text>
<text x="1261" y="681.5" font-size="9.6" fill="#fff">60</text>
<text x="1261" y="707.2" font-size="9.6" fill="#fff">25</text>
<text x="1261" y="729.2" font-size="9.6" fill="#fff">0.</text>
<text x="1261" y="751.6" font-size="9.6" fill="#fff">-2</text>
<text x="1261" y="814" font-size="9.6" fill="#fff">-1</text>
</svg></body></html>
